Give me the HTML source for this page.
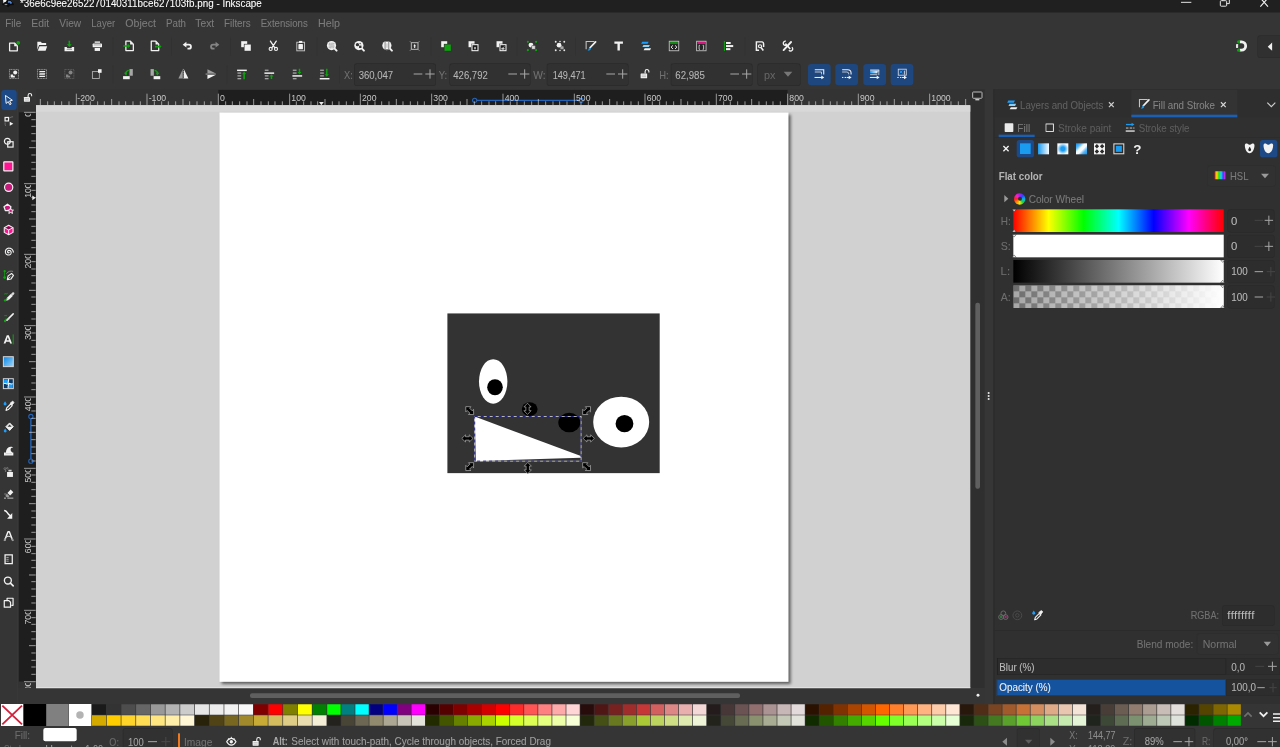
<!DOCTYPE html>
<html lang="en"><head><meta charset="utf-8"><title>Inkscape</title>
<style>
html,body{margin:0;padding:0;background:#353535;width:1280px;height:747px;overflow:hidden}
body{font-family:"Liberation Sans",sans-serif;-webkit-font-smoothing:antialiased}
#root{position:absolute;left:0;top:0;width:1920px;height:1121px;transform:scale(0.6666667);transform-origin:0 0;overflow:hidden;background:#353535}
#root div,#root svg.i,#root svg.a{position:absolute}
.t{white-space:nowrap;line-height:1.2;letter-spacing:-0.2px;-webkit-text-stroke:0.12px currentColor}
.b{font-weight:bold;-webkit-text-stroke:0}
svg{overflow:visible}

</style></head>
<body>
<div id="root">
<!-- p_base -->
<div style="left:0px;top:0px;width:1920px;height:18.5px;background:#202020"></div>
<div style="left:0px;top:18.5px;width:1920px;height:1102.5px;background:#353535"></div>
<div style="left:26px;top:133.5px;width:1px;height:922.5px;background:#3b3b3b"></div>
<div style="left:54px;top:157.5px;width:1401px;height:874px;background:#d1d1d1;overflow:hidden"></div>
<div style="left:1455px;top:133.5px;width:23px;height:898.5px;background:#2f2f2f"></div>
<div style="left:1490px;top:133.5px;width:430.5px;height:922.5px;background:#303030"></div>
<!-- p_menu -->
<svg class="a" style="left:3px;top:0" width="18" height="12" viewBox="0 0 18 12"><path d="M0.6,5.6L6.5,-1h5l6,6.6c0.8,1 0,2.4 -1.6,2.4h-3.4l-3.4,3l-3.6,-3H2.4c-1.8,0 -2.6,-1.4 -1.8,-2.4z" fill="#0c0c0e"/><path d="M1.6,0H7.2l-1.4,2.6l-2.2,0.6l-1.4,2z" fill="#f4f4f4"/><path d="M9.2,1.2l3.6,0.4l2.4,3l-2,1.4l-2.2,-2.2l-2.2,0.6z" fill="#4f86d8"/><path d="M3.2,6.6l3,-0.8l2.4,1.2l-2.6,0.8z" fill="#d8d8d8" opacity=".7"/></svg>
<div class="t" style="left:29.77px;top:-1.90px;font-size:16.95px;line-height:1;letter-spacing:0;color:#ffffff;transform:scaleX(0.872);transform-origin:0 0;">*36e6c9ee2652270140311bce627103fb.png - Inkscape</div>
<svg class="a" style="left:1760px;top:0" width="160" height="18" viewBox="0 0 160 18" fill="none" stroke="#f2f2f2" stroke-width="1.4"><path d="M11.5,3.5H27"/><rect x="70.5" y="1" width="9.5" height="8.3" rx="1.4"/><path d="M74,1V-2H84V5.4H80"/><path d="M130.5,-3L142,9.8M142,-3L130.5,9.8" stroke-width="1.7"/></svg>
<div class="t" style="left:7.88px;top:27.65px;font-size:16.95px;line-height:1;letter-spacing:0;color:#7c7c7c;transform:scaleX(0.868);transform-origin:0 0;">File</div>
<div class="t" style="left:47.17px;top:27.65px;font-size:16.95px;line-height:1;letter-spacing:0;color:#7c7c7c;transform:scaleX(0.914);transform-origin:0 0;">Edit</div>
<div class="t" style="left:89.47px;top:27.65px;font-size:16.95px;line-height:1;letter-spacing:0;color:#7c7c7c;transform:scaleX(0.897);transform-origin:0 0;">View</div>
<div class="t" style="left:137.48px;top:27.65px;font-size:16.95px;line-height:1;letter-spacing:0;color:#7c7c7c;transform:scaleX(0.842);transform-origin:0 0;">Layer</div>
<div class="t" style="left:188.18px;top:27.65px;font-size:16.95px;line-height:1;letter-spacing:0;color:#7c7c7c;transform:scaleX(0.937);transform-origin:0 0;">Object</div>
<div class="t" style="left:248.93px;top:27.65px;font-size:16.95px;line-height:1;letter-spacing:0;color:#7c7c7c;transform:scaleX(0.860);transform-origin:0 0;">Path</div>
<div class="t" style="left:293.48px;top:27.65px;font-size:16.95px;line-height:1;letter-spacing:0;color:#7c7c7c;transform:scaleX(0.907);transform-origin:0 0;">Text</div>
<div class="t" style="left:336.23px;top:27.65px;font-size:16.95px;line-height:1;letter-spacing:0;color:#7c7c7c;transform:scaleX(0.871);transform-origin:0 0;">Filters</div>
<div class="t" style="left:391.42px;top:27.65px;font-size:16.95px;line-height:1;letter-spacing:0;color:#7c7c7c;transform:scaleX(0.852);transform-origin:0 0;">Extensions</div>
<div class="t" style="left:476.92px;top:27.65px;font-size:16.95px;line-height:1;letter-spacing:0;color:#7c7c7c;transform:scaleX(0.947);transform-origin:0 0;">Help</div>
<!-- p_toolbar -->
<svg class="i" style="left:13.75px;top:61.3px;" width="16" height="16" viewBox="0 0 16 16" ><path d="M0.4,3.6h7.3999999999999995l4.2,4.2v7.3999999999999995h-11.6z" fill="none" stroke="#f2f2f2" stroke-width="1.9" stroke-linejoin="round"/><path d="M7.3999999999999995,3.6v4.6000000000000005h4.6000000000000005z" fill="#f2f2f2"/><circle cx="13.4" cy="3.3" r="2.8" fill="#0ea30e"/></svg>
<svg class="i" style="left:55.12px;top:61.3px;" width="16" height="16" viewBox="0 0 16 16" ><path d="M1,1.6h5.2l1.6,1.8h6.4v3.2H3.6L1,13.8z" fill="#f2f2f2"/><path d="M4.3,8.2H15.8L13.4,15H1.6z" fill="#f2f2f2"/></svg>
<svg class="i" style="left:96.49px;top:61.3px;" width="16" height="16" viewBox="0 0 16 16" ><path d="M0.8,9.6H4l1,1.6h6l1,-1.6H15.2V15.8H0.8z" fill="#f2f2f2"/><path d="M4,13.2H12" stroke="#777" stroke-width="1"/><path d="M6.8,0V5.3999999999999995H4.4L8,9.6L11.6,5.3999999999999995H9.2V0z" fill="#0ea30e"/></svg>
<svg class="i" style="left:137.86px;top:61.3px;" width="16" height="16" viewBox="0 0 16 16" ><rect x="4" y="1" width="8" height="2.4" fill="#f2f2f2" opacity=".85"/><rect x="1" y="4.4" width="14" height="5.6" rx="1" fill="#f2f2f2"/><path d="M2.5,6.4H13.5" stroke="#8a8a8a" stroke-width="1"/><rect x="4" y="11" width="8" height="4.4" fill="#f2f2f2"/></svg>
<div style="left:169px;top:55.5px;width:1px;height:27px;background:#313131"></div>
<svg class="i" style="left:184.555px;top:61.3px;" width="16" height="16" viewBox="0 0 16 16" ><path d="M3.8,0.8h6.799999999999999l4.4,4.4v9.6h-11.2z" fill="none" stroke="#f2f2f2" stroke-width="1.9" stroke-linejoin="round"/><path d="M10.2,0.8v4.800000000000001h4.800000000000001z" fill="#f2f2f2"/><path d="M0,6.7H6.6V4.5L10.6,8.0L6.6,11.5V9.3H0z" fill="#0ea30e"/></svg>
<svg class="i" style="left:225.925px;top:61.3px;" width="16" height="16" viewBox="0 0 16 16" ><path d="M0.9,0.8h6.799999999999999l4.4,4.4v9.6h-11.2z" fill="none" stroke="#f2f2f2" stroke-width="1.9" stroke-linejoin="round"/><path d="M7.299999999999999,0.8v4.800000000000001h4.800000000000001z" fill="#f2f2f2"/><path d="M6.6,7.500000000000001H12.399999999999999V5.300000000000001L16.4,8.8L12.399999999999999,12.3V10.100000000000001H6.6z" fill="#0ea30e"/></svg>
<div style="left:257px;top:55.5px;width:1px;height:27px;background:#313131"></div>
<svg class="i" style="left:272.62px;top:61.3px;" width="16" height="16" viewBox="0 0 16 16" ><path d="M1,6.2L6.6,1.8V4.6H10.4A4.4,4.4 0 0 1 10.4,13.4H8.2V10.6H10.4A1.6,1.6 0 0 0 10.4,7.4H6.6V10.4Z" fill="#f2f2f2"/></svg>
<svg class="i" style="left:313.99px;top:61.3px;" width="16" height="16" viewBox="0 0 16 16" ><g opacity=".42"><path transform="translate(16,0) scale(-1,1)" d="M1,6.2L6.6,1.8V4.6H10.4A4.4,4.4 0 0 1 10.4,13.4H8.2V10.6H10.4A1.6,1.6 0 0 0 10.4,7.4H6.6V10.4Z" fill="#f2f2f2"/></g></svg>
<div style="left:345px;top:55.5px;width:1px;height:27px;background:#313131"></div>
<svg class="i" style="left:360.685px;top:61.3px;" width="16" height="16" viewBox="0 0 16 16" ><rect x="0.8" y="0.8" width="9" height="9" fill="#f2f2f2"/><rect x="4.8" y="4.8" width="11" height="11" fill="#353535"/><rect x="5.8" y="5.8" width="9.4" height="9.4" fill="#f2f2f2"/></svg>
<svg class="i" style="left:402.055px;top:61.3px;" width="16" height="16" viewBox="0 0 16 16" ><path d="M3.6,0.6L10,10.4M12.4,0.6L6,10.4" stroke="#f2f2f2" stroke-width="1.9" fill="none" stroke-linecap="round"/><circle cx="4" cy="12.4" r="2.3" fill="none" stroke="#f2f2f2" stroke-width="1.7"/><circle cx="12" cy="12.4" r="2.3" fill="none" stroke="#f2f2f2" stroke-width="1.7"/></svg>
<svg class="i" style="left:443.425px;top:61.3px;" width="16" height="16" viewBox="0 0 16 16" ><rect x="2.2" y="2.4" width="11.6" height="12.8" fill="none" stroke="#bdbdbd" stroke-width="1.5"/><rect x="5.6" y="0.4" width="4.8" height="3" fill="#f2f2f2"/><rect x="4.6" y="5" width="6.8" height="8" rx="1" fill="#f2f2f2"/></svg>
<div style="left:474.5px;top:55.5px;width:1px;height:27px;background:#313131"></div>
<svg class="i" style="left:490.12px;top:61.3px;" width="16" height="16" viewBox="0 0 16 16" ><circle cx="7.3" cy="7.3" r="6.9" fill="#f2f2f2"/><path d="M11.6,11.6L14.9,14.9" stroke="#f2f2f2" stroke-width="3" stroke-linecap="round"/><rect x="3.8" y="3.8" width="7" height="7" fill="#dcdcdc" stroke="#8a8a8a" stroke-width="1" stroke-dasharray="1.4 0.9"/><path d="M5.4,6.2H9.2M5.4,8.4H9.2" stroke="#a0a0a0" stroke-width=".9"/></svg>
<svg class="i" style="left:531.49px;top:61.3px;" width="16" height="16" viewBox="0 0 16 16" ><circle cx="7.3" cy="7.3" r="6.9" fill="#f2f2f2"/><path d="M11.6,11.6L14.9,14.9" stroke="#f2f2f2" stroke-width="3" stroke-linecap="round"/><circle cx="5.2" cy="6" r="2.5" fill="#333"/><path d="M7.6,7.4h3.6v3.6h-3.6z" fill="#333"/><path d="M7.4,4.2l2.2,-1l1.4,2.4z" fill="#555"/></svg>
<svg class="i" style="left:572.86px;top:61.3px;" width="16" height="16" viewBox="0 0 16 16" ><circle cx="7.3" cy="7.3" r="6.9" fill="#f2f2f2"/><path d="M11.6,11.6L14.9,14.9" stroke="#f2f2f2" stroke-width="3" stroke-linecap="round"/><rect x="4.6" y="1.4" width="5.6" height="11.8" fill="#f6f6f6" stroke="#6a6a6a" stroke-width="1.2"/><rect x="6.4" y="4" width="2" height="6.6" fill="#c8c8c8"/></svg>
<svg class="i" style="left:614.23px;top:61.3px;" width="16" height="16" viewBox="0 0 16 16" ><rect x="3" y="3" width="10" height="10" fill="none" stroke="#b8b8b8" stroke-width="1.5"/><path d="M0.8,0.8L3,3M15.2,0.8L13,3M0.8,15.2L3,13M15.2,15.2L13,13" stroke="#9a9a9a" stroke-width="1.3"/><path d="M8,5L10,8.2H8.8V11H7.2V8.2H6z" fill="#f2f2f2"/></svg>
<div style="left:645.5px;top:55.5px;width:1px;height:27px;background:#313131"></div>
<svg class="i" style="left:660.925px;top:61.3px;" width="16" height="16" viewBox="0 0 16 16" ><rect x="0.8" y="0.8" width="9" height="9" fill="#f2f2f2"/><rect x="4.8" y="4.8" width="11" height="11" fill="#353535"/><rect x="5.8" y="5.8" width="9.4" height="9.4" fill="#0ea30e"/></svg>
<svg class="i" style="left:702.295px;top:61.3px;" width="16" height="16" viewBox="0 0 16 16" ><rect x="0.8" y="0.8" width="9" height="9" fill="#f2f2f2"/><rect x="4.6" y="4.6" width="11.2" height="11.2" fill="#353535"/><rect x="6" y="6" width="9" height="9" fill="#1a1a1a" stroke="#f2f2f2" stroke-width="1.6"/><path d="M9.2,13V10.4a1.3,1.3 0 0 1 2.6,0V13z" fill="#bbb"/></svg>
<svg class="i" style="left:743.665px;top:61.3px;" width="16" height="16" viewBox="0 0 16 16" ><rect x="0.8" y="0.8" width="9" height="9" fill="#f2f2f2"/><rect x="4.6" y="4.6" width="11.2" height="11.2" fill="#353535"/><rect x="6" y="6" width="9" height="9" fill="#1a1a1a" stroke="#f2f2f2" stroke-width="1.6"/><path d="M8.6,13V11h3.6v2zM11,10.6l1.6,-2.2" fill="#ccc" stroke="#ccc" stroke-width="1"/></svg>
<div style="left:775px;top:55.5px;width:1px;height:27px;background:#313131"></div>
<svg class="i" style="left:790.36px;top:61.3px;" width="16" height="16" viewBox="0 0 16 16" ><circle cx="1.8" cy="1.8" r="1.6" fill="#0ea30e"/><circle cx="1.8" cy="14.2" r="1.6" fill="#0ea30e"/><circle cx="14.2" cy="1.8" r="1.6" fill="#0ea30e"/><circle cx="14.2" cy="14.2" r="1.6" fill="#0ea30e"/><circle cx="6.4" cy="6.6" r="3.6" fill="#f2f2f2"/><rect x="7.4" y="7.4" width="5.6" height="5.6" rx="1" fill="#dcdcdc" stroke="#353535" stroke-width=".8"/></svg>
<svg class="i" style="left:831.73px;top:61.3px;" width="16" height="16" viewBox="0 0 16 16" ><circle cx="1.6" cy="1.6" r="1.4" fill="#e6e6e6"/><circle cx="1.6" cy="14.4" r="1.4" fill="#e6e6e6"/><circle cx="14.4" cy="1.6" r="1.4" fill="#e6e6e6"/><circle cx="14.4" cy="14.4" r="1.4" fill="#e6e6e6"/><circle cx="8" cy="1.2" r="1.2" fill="#ddd"/><circle cx="8" cy="14.8" r="1.2" fill="#ddd"/><circle cx="6.6" cy="6.8" r="3.6" fill="#f2f2f2"/><rect x="8.6" y="8.2" width="4.8" height="4.8" rx="1" fill="#a8a8a8"/></svg>
<div style="left:863px;top:55.5px;width:1px;height:27px;background:#313131"></div>
<svg class="i" style="left:878.425px;top:61.3px;" width="16" height="16" viewBox="0 0 16 16" ><path d="M1.2,13V1.2H13.6" fill="none" stroke="#c4c4c4" stroke-width="1.6"/><path d="M15.4,1.8L7,10.6" stroke="#f2f2f2" stroke-width="2.6" stroke-linecap="round"/><path d="M6.8,10.2l1.6,1.6c-0.4,2.2 -2.4,3.6 -5.2,3.4c1.6,-1 1.2,-3.6 3.6,-5z" fill="#1a9bf0"/></svg>
<svg class="i" style="left:919.795px;top:61.3px;" width="16" height="16" viewBox="0 0 16 16" ><path d="M1.6,1.4H14.4V4.6H9.8V14.8H6.2V4.6H1.6z" fill="#f2f2f2"/></svg>
<svg class="i" style="left:961.165px;top:61.3px;" width="16" height="16" viewBox="0 0 16 16" ><path d="M2.4,1.8H12l-1.6,3H0.8z" fill="#1a9fff"/><path d="M4.2,6.6H13.8l-1.6,3H2.6z" fill="#8ccff7"/><path d="M6,11.4H15.6l-1.6,3H4.4z" fill="#f2f2f2"/></svg>
<svg class="i" style="left:1002.53px;top:61.3px;" width="16" height="16" viewBox="0 0 16 16" ><rect x="0.9" y="0.9" width="14.2" height="14.2" fill="#262626" stroke="#bdbdbd" stroke-width="1.4"/><rect x="2.2" y="2.2" width="11.6" height="2.6" fill="#0e9a0e"/><path d="M6.4,7.2L3.6,9.8L6.4,12.4M9.6,7.2L12.4,9.8L9.6,12.4" fill="none" stroke="#f2f2f2" stroke-width="1.5"/></svg>
<svg class="i" style="left:1043.9px;top:61.3px;" width="16" height="16" viewBox="0 0 16 16" ><rect x="0.9" y="0.9" width="14.2" height="14.2" fill="#262626" stroke="#bdbdbd" stroke-width="1.4"/><rect x="2.2" y="2.2" width="11.6" height="2.6" fill="#f0148c"/><path d="M6,7H4.6V13H6M10,7H11.4V13H10" fill="none" stroke="#c8c8c8" stroke-width="1.4"/></svg>
<svg class="i" style="left:1085.28px;top:61.3px;" width="16" height="16" viewBox="0 0 16 16" ><path d="M1.6,0.4V15.6" stroke="#0ea30e" stroke-width="1.5"/><rect x="4" y="2" width="7" height="3" fill="#f2f2f2"/><rect x="4" y="6.6" width="10.8" height="3" fill="#f2f2f2"/><rect x="4" y="11.2" width="6.6" height="3" fill="#f2f2f2"/></svg>
<div style="left:1116.5px;top:55.5px;width:1px;height:27px;background:#313131"></div>
<svg class="i" style="left:1131.97px;top:61.3px;" width="16" height="16" viewBox="0 0 16 16" ><path d="M6.6,14.4H2.6V1.8H10.6a2.8,2.8 0 0 1 2.8,2.8V9.6" fill="none" stroke="#f2f2f2" stroke-width="2.2"/><circle cx="8" cy="8.4" r="2.3" fill="none" stroke="#f2f2f2" stroke-width="1.7"/><path d="M9.6,10.2L13,14.8" stroke="#f2f2f2" stroke-width="2.4"/></svg>
<svg class="i" style="left:1173.34px;top:61.3px;" width="16" height="16" viewBox="0 0 16 16" ><path d="M2.4,14.2L13.6,2" stroke="#f2f2f2" stroke-width="2.8" stroke-linecap="round"/><path d="M5,4.4L12.4,12.6" stroke="#f2f2f2" stroke-width="2.4"/><path d="M5.8,0.8a3.2,3.2 0 1 0 0.8,6" fill="none" stroke="#f2f2f2" stroke-width="2"/><path d="M14.8,9.8a3.2,3.2 0 1 1 -4.4,4.6" fill="none" stroke="#f2f2f2" stroke-width="2"/></svg>
<svg class="i" style="left:13.3px;top:102.85px;" width="16" height="16" viewBox="0 0 16 16" ><rect x="1.2" y="1.2" width="13.6" height="13.6" fill="none" stroke="#a8a8a8" stroke-width="1.2" stroke-dasharray="1.6 0.8" opacity="1"/><circle cx="9.8" cy="5.8" r="3" fill="#f2f2f2"/><path d="M3,8.6H6.6V10.6H9.2V13.2H3z" fill="#f2f2f2"/></svg>
<svg class="i" style="left:54.55px;top:102.85px;" width="16" height="16" viewBox="0 0 16 16" ><rect x="1.2" y="1.2" width="13.6" height="13.6" fill="none" stroke="#a8a8a8" stroke-width="1.2" stroke-dasharray="1.6 0.8" opacity="1"/><path d="M4.4,3.4H13l-0.8,2H3.6zM4.4,7H13l-0.8,2H3.6zM4.4,10.6H13l-0.8,2H3.6z" fill="#f2f2f2"/></svg>
<svg class="i" style="left:95.8px;top:102.85px;" width="16" height="16" viewBox="0 0 16 16" ><g opacity=".42"><rect x="1.2" y="1.2" width="13.6" height="13.6" fill="none" stroke="#a8a8a8" stroke-width="1.2" stroke-dasharray="1.6 0.8" opacity="1"/><circle cx="9.8" cy="5.8" r="3" fill="#f2f2f2"/><path d="M3,8.6H6.6V10.6H9.2V13.2H3z" fill="#f2f2f2"/></g></svg>
<svg class="i" style="left:137.05px;top:102.85px;" width="16" height="16" viewBox="0 0 16 16" ><rect x="1.6" y="4.4" width="10.4" height="10.4" fill="none" stroke="#b4b4b4" stroke-width="1.3"/><rect x="10" y="0.8" width="5.4" height="5.4" fill="#f2f2f2"/></svg>
<div style="left:168.5px;top:97.5px;width:1px;height:27px;background:#313131"></div>
<svg class="i" style="left:184.15px;top:102.85px;" width="16" height="16" viewBox="0 0 16 16" ><rect x="10.2" y="0.6" width="5" height="10" fill="#a6a6a6"/><rect x="0.6" y="11.2" width="10" height="4.6" fill="#f2f2f2"/><path d="M9.2,2.6A6,6 0 0 0 4.4,7.4" fill="none" stroke="#0ea30e" stroke-width="2.2"/><path d="M1.8,6.2L7.2,6L5.4,10.6z" fill="#0ea30e"/></svg>
<svg class="i" style="left:225.4px;top:102.85px;" width="16" height="16" viewBox="0 0 16 16" ><g transform="translate(16,0) scale(-1,1)"><rect x="10.2" y="0.6" width="5" height="10" fill="#a6a6a6"/><rect x="0.6" y="11.2" width="10" height="4.6" fill="#f2f2f2"/><path d="M9.2,2.6A6,6 0 0 0 4.4,7.4" fill="none" stroke="#0ea30e" stroke-width="2.2"/><path d="M1.8,6.2L7.2,6L5.4,10.6z" fill="#0ea30e"/></g></svg>
<svg class="i" style="left:266.65px;top:102.85px;" width="16" height="16" viewBox="0 0 16 16" ><path d="M7,1.4V14.8H0.6z" fill="#9c9c9c"/><path d="M9,1.4V14.8H15.6z" fill="#f2f2f2"/><path d="M8,0.4V15.8" stroke="#c8c8c8" stroke-width="1" stroke-dasharray="2 1.2"/></svg>
<svg class="i" style="left:307.9px;top:102.85px;" width="16" height="16" viewBox="0 0 16 16" ><path d="M3.2,6.8H15.2L3.2,0.8z" fill="#9c9c9c"/><path d="M3.2,9.4H15.2L3.2,15.4z" fill="#f2f2f2"/><path d="M0.4,8.1H15.8" stroke="#d0d0d0" stroke-width="1.1"/></svg>
<div style="left:339.5px;top:97.5px;width:1px;height:27px;background:#313131"></div>
<svg class="i" style="left:355px;top:102.85px;" width="16" height="16" viewBox="0 0 16 16" ><rect x="0.6" y="1.4" width="14.6" height="2.2" fill="#f2f2f2"/><rect x="1.2" y="5.6" width="5.6" height="2" fill="#a2a2a2"/><rect x="1.2" y="9.8" width="5.6" height="2" fill="#a2a2a2"/><rect x="1.2" y="14.000000000000002" width="5.6" height="2" fill="#a2a2a2"/><path d="M10.0,15.8V8.2H8.1L11.2,4.4L14.299999999999999,8.2H12.399999999999999V15.8z" fill="#0ea30e"/></svg>
<svg class="i" style="left:396.25px;top:102.85px;" width="16" height="16" viewBox="0 0 16 16" ><rect x="1.2" y="1.4" width="5.6" height="2" fill="#a2a2a2"/><rect x="0.6" y="5.6" width="14.6" height="2.2" fill="#f2f2f2"/><rect x="1.2" y="9.8" width="5.6" height="2" fill="#a2a2a2"/><rect x="1.2" y="14.000000000000002" width="5.6" height="2" fill="#a2a2a2"/><path d="M10.1,15.6V11.6H8.2L11.2,8.2L14.2,11.6H12.299999999999999V15.6z" fill="#0ea30e"/></svg>
<svg class="i" style="left:437.5px;top:102.85px;" width="16" height="16" viewBox="0 0 16 16" ><rect x="1.2" y="1.4" width="5.6" height="2" fill="#a2a2a2"/><rect x="1.2" y="5.6" width="5.6" height="2" fill="#a2a2a2"/><rect x="0.6" y="9.8" width="14.6" height="2.2" fill="#f2f2f2"/><rect x="1.2" y="14.000000000000002" width="5.6" height="2" fill="#a2a2a2"/><path d="M10.1,0.2V5.0H8.2L11.2,8.6L14.2,5.0H12.299999999999999V0.2z" fill="#0ea30e"/></svg>
<svg class="i" style="left:478.75px;top:102.85px;" width="16" height="16" viewBox="0 0 16 16" ><rect x="1.2" y="1.4" width="5.6" height="2" fill="#a2a2a2"/><rect x="1.2" y="5.6" width="5.6" height="2" fill="#a2a2a2"/><rect x="1.2" y="9.8" width="5.6" height="2" fill="#a2a2a2"/><rect x="0.6" y="14.000000000000002" width="14.6" height="2.2" fill="#f2f2f2"/><path d="M10.1,0.2V8.2H8.2L11.2,12L14.2,8.2H12.299999999999999V0.2z" fill="#0ea30e"/></svg>
<div style="left:509px;top:97.5px;width:1px;height:27px;background:#313131"></div>
<div class="t" style="left:515.92px;top:104.60px;font-size:16.95px;line-height:1;letter-spacing:0;color:#727272;transform:scaleX(0.824);transform-origin:0 0;">X:</div><div style="left:531px;top:95px;width:122.5px;height:34px;background:#313131;border-radius:5px;box-shadow:inset 0 0 0 1px #2a2a2a"></div><div class="t" style="left:538.42px;top:104.60px;font-size:16.95px;line-height:1;letter-spacing:0;color:#b6b6b6;transform:scaleX(0.845);transform-origin:0 0;">360,047</div><svg class="a" style="left:620.2px;top:101.2px" width="34" height="20" viewBox="0 0 34 20" fill="none" stroke="#a8a8a8" stroke-width="1.5"><path d="M0.5,10H13.5M18,10H32M25,3V17"/></svg>
<div class="t" style="left:658.42px;top:104.60px;font-size:16.95px;line-height:1;letter-spacing:0;color:#727272;transform:scaleX(0.845);transform-origin:0 0;">Y:</div><div style="left:673.5px;top:95px;width:122px;height:34px;background:#313131;border-radius:5px;box-shadow:inset 0 0 0 1px #2a2a2a"></div><div class="t" style="left:680.47px;top:104.60px;font-size:16.95px;line-height:1;letter-spacing:0;color:#b6b6b6;transform:scaleX(0.842);transform-origin:0 0;">426,792</div><svg class="a" style="left:761.9px;top:101.2px" width="34" height="20" viewBox="0 0 34 20" fill="none" stroke="#a8a8a8" stroke-width="1.5"><path d="M0.5,10H13.5M18,10H32M25,3V17"/></svg>
<div class="t" style="left:800.47px;top:104.60px;font-size:16.95px;line-height:1;letter-spacing:0;color:#727272;transform:scaleX(0.904);transform-origin:0 0;">W:</div><div style="left:819.5px;top:95px;width:123.5px;height:34px;background:#313131;border-radius:5px;box-shadow:inset 0 0 0 1px #2a2a2a"></div><div class="t" style="left:828.67px;top:104.60px;font-size:16.95px;line-height:1;letter-spacing:0;color:#b6b6b6;transform:scaleX(0.808);transform-origin:0 0;">149,471</div><svg class="a" style="left:909.3px;top:101.2px" width="34" height="20" viewBox="0 0 34 20" fill="none" stroke="#a8a8a8" stroke-width="1.5"><path d="M0.5,10H13.5M18,10H32M25,3V17"/></svg>
<svg class="i" style="left:959.55px;top:102.9px;" width="15" height="15" viewBox="0 0 16 16" ><rect x="1" y="7.6" width="10.4" height="7.8" rx="0.8" fill="#f2f2f2"/><path d="M8.2,7.6V4.4a3,3 0 0 1 6,0V6.2" fill="none" stroke="#f2f2f2" stroke-width="1.8"/><path d="M2.6,10.2H9.8M2.6,12.8H9.8" stroke="#9a9a9a" stroke-width=".9"/></svg>
<div class="t" style="left:989.03px;top:104.60px;font-size:16.95px;line-height:1;letter-spacing:0;color:#727272;transform:scaleX(0.832);transform-origin:0 0;">H:</div><div style="left:1005.5px;top:95px;width:123.5px;height:34px;background:#313131;border-radius:5px;box-shadow:inset 0 0 0 1px #2a2a2a"></div><div class="t" style="left:1012.88px;top:104.60px;font-size:16.95px;line-height:1;letter-spacing:0;color:#b6b6b6;transform:scaleX(0.854);transform-origin:0 0;">62,985</div><svg class="a" style="left:1095.3px;top:101.2px" width="34" height="20" viewBox="0 0 34 20" fill="none" stroke="#a8a8a8" stroke-width="1.5"><path d="M0.5,10H13.5M18,10H32M25,3V17"/></svg>
<div style="left:1136px;top:95px;width:64.5px;height:34px;background:#313131;border-radius:5px;box-shadow:inset 0 0 0 1px #2a2a2a"></div>
<div class="t" style="left:1145.78px;top:104.90px;font-size:16.95px;line-height:1;letter-spacing:0;color:#666;transform:scaleX(0.955);transform-origin:0 0;">px</div>
<svg class="a" style="left:1175px;top:106.5px" width="14" height="9" viewBox="0 0 14 9"><path d="M0.5,0.5H13.5L7,8z" fill="#777"/></svg>
<div style="left:1212px;top:95.5px;width:34px;height:32px;background:#1f477f;border-radius:5px"></div>
<svg class="i" style="left:1221.1px;top:103px;" width="16" height="16" viewBox="0 0 16 16" ><path d="M1.2,1.6H14.6V8.6" fill="none" stroke="#f2f2f2" stroke-width="1.6"/><path d="M1.2,5H11.2V8.6" fill="none" stroke="#d8d8d8" stroke-width="1.3"/><path d="M0.8,13.2H12" stroke="#f2f2f2" stroke-width="1.5"/><path d="M11,10.4L15.4,13.2L11,16z" fill="#f2f2f2"/></svg>
<div style="left:1253px;top:95.5px;width:34px;height:32px;background:#1f477f;border-radius:5px"></div>
<svg class="i" style="left:1262.35px;top:103px;" width="16" height="16" viewBox="0 0 16 16" ><path d="M1.2,1.6H9.6A5,5 0 0 1 14.6,6.6V8.6" fill="none" stroke="#f2f2f2" stroke-width="1.6"/><path d="M1.2,5H8.2A3,3 0 0 1 11.2,8V8.6" fill="none" stroke="#d8d8d8" stroke-width="1.3"/><path d="M1,13.2H3M5,13.2H7" stroke="#f2f2f2" stroke-width="1.5"/><path d="M8,13.2H12" stroke="#f2f2f2" stroke-width="1.5"/><path d="M11,10.4L15.4,13.2L11,16z" fill="#f2f2f2"/></svg>
<div style="left:1294.5px;top:95.5px;width:34px;height:32px;background:#1f477f;border-radius:5px"></div>
<svg class="i" style="left:1303.6px;top:103px;" width="16" height="16" viewBox="0 0 16 16" ><defs><linearGradient id="tg3g" x1="0" x2="1"><stop offset="0" stop-color="#1a9fff"/><stop offset="1" stop-color="#e8f4ff"/></linearGradient></defs><rect x="1.2" y="1" width="13.6" height="3.6" fill="#9cb4d4"/><rect x="1.2" y="3.4" width="11" height="3.6" fill="url(#tg3g)"/><path d="M14.2,2V9.6M1.2,9H12" stroke="#d8d8d8" stroke-width="1.2" fill="none"/><path d="M0.8,13.2H12" stroke="#f2f2f2" stroke-width="1.5"/><path d="M11,10.4L15.4,13.2L11,16z" fill="#f2f2f2"/></svg>
<div style="left:1336px;top:95.5px;width:34px;height:32px;background:#1f477f;border-radius:5px"></div>
<svg class="i" style="left:1344.85px;top:103px;" width="16" height="16" viewBox="0 0 16 16" ><rect x="2.4" y="0.8" width="12" height="9" fill="none" stroke="#d0d8e4" stroke-width="1.3"/><path d="M4.6,2.8L8.6,6.8M8.6,2.8L4.6,6.8" stroke="#1a9fff" stroke-width="1.5"/><path d="M11.6,3V9" stroke="#f2f2f2" stroke-width="1.2"/><path d="M1,13.2H3M5,13.2H7" stroke="#f2f2f2" stroke-width="1.5"/><path d="M8,13.2H12" stroke="#f2f2f2" stroke-width="1.5"/><path d="M11,10.4L15.4,13.2L11,16z" fill="#f2f2f2"/></svg>
<svg class="i" style="left:1852.95px;top:60.45px;" width="18" height="18" viewBox="0 0 18 18" ><path d="M6.4,2.8H9.3A6.2,6.2 0 0 1 9.3,15.2H6.4" fill="none" stroke="#f2f2f2" stroke-width="4.2"/><circle cx="4.9" cy="2.8" r="2.3" fill="#0ea30e"/><circle cx="4.9" cy="15.2" r="2.3" fill="#0ea30e"/><rect x="1" y="6" width="3.2" height="6" rx="0.6" fill="#e4e4e4"/></svg>
<div style="left:1886px;top:53px;width:36px;height:33.5px;background:#303030;border-radius:5px 0 0 5px;box-shadow:inset 0 0 0 1px #2b2b2b"></div>
<svg class="a" style="left:1900.5px;top:62.5px" width="8" height="14" viewBox="0 0 8 14"><path d="M7.2,0.8V13.2L0.6,7z" fill="#f0f0f0"/></svg>
<!-- p_toolbox -->
<div style="left:2px;top:134.5px;width:22.5px;height:30.5px;background:#1d4a86;border-radius:4.5px"></div>
<svg class="i" style="left:4.75px;top:142.3px;" width="16" height="16" viewBox="0 0 16 16" ><path d="M3.2,1.2L13.6,8.4L9.4,9.4L11.8,14L9.6,15L7.4,10.4L4.2,13.2z" fill="#1d4a86" stroke="#f2f2f2" stroke-width="1.5" stroke-linejoin="round"/></svg>
<svg class="i" style="left:4.75px;top:173.8px;" width="16" height="16" viewBox="0 0 16 16" ><rect x="2.6" y="2.2" width="5.2" height="5.2" fill="#353535" stroke="#f2f2f2" stroke-width="1.8"/><path d="M8.6,3.6C10.6,1.8 12.4,1.2 14.6,1.2" fill="none" stroke="#8a8a8a" stroke-width="1"/><path d="M2.6,9.6C2.4,11.8 2.8,13.4 3.4,14.8" fill="none" stroke="#8a8a8a" stroke-width="1"/><path d="M9.6,8.6L15,11.6L9.6,14.8z" fill="#f2f2f2"/></svg>
<svg class="i" style="left:4.75px;top:206.2px;" width="16" height="16" viewBox="0 0 16 16" ><circle cx="6" cy="6" r="4.4" fill="none" stroke="#f2f2f2" stroke-width="1.8"/><rect x="6.6" y="6.6" width="8" height="8" fill="none" stroke="#f2f2f2" stroke-width="1.8"/><path d="M7.6,7.6h3l-3,3z" fill="#ccc"/></svg>
<svg class="i" style="left:4.25px;top:240.5px;" width="17" height="17" viewBox="0 0 16 16" ><rect x="1.6" y="1.6" width="12.8" height="12.8" rx="0.6" fill="#ff1493" stroke="#f2f2f2" stroke-width="1.7"/></svg>
<svg class="i" style="left:4.75px;top:273.4px;" width="16" height="16" viewBox="0 0 16 16" ><circle cx="8" cy="8" r="6.2" fill="#c8197c" stroke="#f2f2f2" stroke-width="1.8"/></svg>
<svg class="i" style="left:4.75px;top:305.2px;" width="16" height="16" viewBox="0 0 16 16" ><path d="M6.2,1.4L11.4,5.2L9.6,11H3L1,5.2z" fill="#c8197c" stroke="#f2f2f2" stroke-width="1.9" stroke-linejoin="round"/><path d="M11,7.2L12.2,10L15.2,10.2L13,12.2L13.8,15.2L11,13.6L8.2,15.2L9,12.2L6.8,10.2L9.8,10z" fill="#c8197c" stroke="#f2f2f2" stroke-width="1.5" stroke-linejoin="round"/></svg>
<svg class="i" style="left:4.75px;top:337.3px;" width="16" height="16" viewBox="0 0 16 16" ><path d="M8,1L14.6,4.4V11.6L8,15L1.4,11.6V4.4z" fill="#ff1493" stroke="#f2f2f2" stroke-width="1.6" stroke-linejoin="round"/><path d="M1.4,4.4L8,7.8L14.6,4.4M8,7.8V15" fill="none" stroke="#f2f2f2" stroke-width="1.5"/><path d="M8,2.6L12.4,4.6L8,6.8L3.6,4.6z" fill="#7a0f4c"/></svg>
<svg class="i" style="left:4.75px;top:369.7px;" width="16" height="16" viewBox="0 0 16 16" ><path d="M8.6,8.7L8.5,8.8L8.4,9.0L8.2,9.1L8.1,9.2L7.8,9.3L7.6,9.3L7.3,9.2L7.1,9.1L6.8,8.9L6.6,8.6L6.5,8.3L6.4,8.0L6.4,7.6L6.4,7.2L6.6,6.8L6.8,6.4L7.1,6.1L7.5,5.8L8.0,5.6L8.5,5.5L9.0,5.6L9.6,5.7L10.1,5.9L10.6,6.2L11.0,6.7L11.3,7.2L11.6,7.8L11.7,8.5L11.7,9.2L11.5,9.9L11.2,10.5L10.8,11.2L10.2,11.7L9.5,12.1L8.8,12.4L7.9,12.5L7.1,12.5L6.2,12.3L5.4,11.9L4.7,11.4L4.0,10.7L3.6,9.9L3.2,9.0L3.1,8.0L3.1,7.0L3.3,6.0L3.8,5.0L4.4,4.1L5.2,3.4L6.1,2.8L7.2,2.4L8.3,2.2L9.5,2.3L10.7,2.5L11.8,3.0L12.8,3.7L13.6,4.6L14.3,5.7L14.8,6.9L15.0,8.2" fill="none" stroke="#f2f2f2" stroke-width="1.7" stroke-linecap="round" stroke-linejoin="round"/></svg>
<svg class="i" style="left:4.75px;top:404.8px;" width="16" height="16" viewBox="0 0 16 16" ><path d="M2,1.6V11" stroke="#0ea30e" stroke-width="1.3"/><circle cx="2" cy="1.8" r="1.7" fill="#0ea30e"/><circle cx="2" cy="11.4" r="2" fill="#0ea30e"/><path d="M4.6,5.4C7.4,1.8 11,1 14.6,2.2" fill="none" stroke="#9a9a9a" stroke-width="1.1"/><path d="M6,14.6L7.2,8.8L12.4,5.2L15.2,8L11.6,13.4z" fill="none" stroke="#f2f2f2" stroke-width="1.7" stroke-linejoin="round"/><path d="M6.4,14.2L10.6,10" stroke="#f2f2f2" stroke-width="1.3"/></svg>
<svg class="i" style="left:4.75px;top:436.6px;" width="16" height="16" viewBox="0 0 16 16" ><path d="M1.4,4.2C3,2.6 4.6,5 6.4,3" fill="none" stroke="#0ea30e" stroke-width="1.4"/><circle cx="2.6" cy="13.6" r="1.8" fill="#0ea30e"/><path d="M2.6,13.6L5,10.6" stroke="#0ea30e" stroke-width="1.4"/><path d="M6.6,11.6L12.6,5.4" stroke="#f2f2f2" stroke-width="4.2" stroke-linecap="butt"/><path d="M13.4,4.6L14.8,3.2" stroke="#d8d8d8" stroke-width="3.6" stroke-linecap="round"/><path d="M4.4,14L5.2,10.2L8.2,13z" fill="#f2f2f2"/></svg>
<svg class="i" style="left:4.75px;top:468.4px;" width="16" height="16" viewBox="0 0 16 16" ><path d="M1.6,5.6C3,4.4 4,6.6 5.6,5" fill="none" stroke="#0ea30e" stroke-width="1.3"/><circle cx="2.6" cy="13.6" r="1.8" fill="#0ea30e"/><path d="M2.6,13.6L4.4,9.4" stroke="#0ea30e" stroke-width="1.3"/><path d="M5.4,12.2L14.8,2.8" stroke="#f2f2f2" stroke-width="2.2" stroke-linecap="round"/><path d="M4.4,13.6L7.6,9.4L9.4,11.2z" fill="#c4c4c4"/></svg>
<svg class="i" style="left:4.75px;top:500.8px;" width="16" height="16" viewBox="0 0 16 16" ><path d="M0.4,14.4L5.2,2H8.2L13,14.4H10.2L9.2,11.6H4.2L3.2,14.4zM5,9.4H8.4L6.7,4.6z" fill="#f2f2f2"/><path d="M14.8,0.6V15.6" stroke="#0ea30e" stroke-width="1.5"/></svg>
<svg class="i" style="left:4.25px;top:534.2px;" width="17" height="17" viewBox="0 0 16 16" ><defs><linearGradient id="tgr" x1="0" y1="0" x2="1" y2="1"><stop offset="0" stop-color="#0c86e4"/><stop offset="1" stop-color="#9ad4fa"/></linearGradient></defs><rect x="1" y="1" width="14" height="14" fill="url(#tgr)" stroke="#d8d8d8" stroke-width="1.4"/></svg>
<svg class="i" style="left:4.25px;top:567.2px;" width="17" height="17" viewBox="0 0 16 16" ><rect x="1" y="1" width="14" height="14" fill="#0b3a68" stroke="#d8d8d8" stroke-width="1.4"/><path d="M2,2H8C9.6,4.4 6.6,6 8,8C5.8,6.6 4.2,9.4 2,8z" fill="#1a9fff"/><path d="M14,14H8C6.4,11.6 9.4,10 8,8C10.2,9.4 11.8,6.6 14,8z" fill="#1a9fff"/><path d="M8,1.6C9.8,4.2 6.4,5.8 8,8C9.6,10.2 6.2,11.8 8,14.4M1.6,8C4.2,6.2 5.8,9.6 8,8C10.2,6.4 11.8,9.8 14.4,8" fill="none" stroke="#f0f8ff" stroke-width="1.5"/></svg>
<svg class="i" style="left:4.75px;top:600.7px;" width="16" height="16" viewBox="0 0 16 16" ><path d="M2.6,0.8C4.2,3 4.8,4 4.8,5A2.2,2.2 0 0 1 0.4,5C0.4,4 1,3 2.6,0.8z" fill="#1a9fff"/><path d="M4,14.6L5,11L11,5L13.4,7.4L7.4,13.4z" fill="none" stroke="#f2f2f2" stroke-width="1.6" stroke-linejoin="round"/><path d="M10.4,3.8L12.6,1.6a1.8,1.8 0 0 1 2.6,2.6L13,6.4z" fill="#f2f2f2" stroke="#f2f2f2" stroke-width="1.2"/></svg>
<svg class="i" style="left:4.75px;top:632.5px;" width="16" height="16" viewBox="0 0 16 16" ><path d="M9.4,1.4L15,7L9.4,12.6L3.8,7z" fill="#f2f2f2" stroke="#f2f2f2" stroke-width="1.4" stroke-linejoin="round"/><path d="M6.2,7L9.4,3.8L12.6,7z" fill="#3a3a3a"/><path d="M2.8,9.6C4.4,11.8 5,12.8 5,13.6A2.2,2.2 0 0 1 0.6,13.6C0.6,12.8 1.2,11.8 2.8,9.6z" fill="#1a9fff"/></svg>
<svg class="i" style="left:4.75px;top:667.6px;" width="16" height="16" viewBox="0 0 16 16" ><path d="M1,15.4V10.6H4C4.2,6.4 6.4,2.6 11,2.2C12.8,2 14.2,2.8 14.8,4C13,3.4 11.4,4.2 11,5.8C10.6,7.6 11.8,9.2 13.6,10.6H15V15.4z" fill="#f2f2f2"/><path d="M3.4,12.6H12.6" stroke="#bdbdbd" stroke-width="1"/></svg>
<svg class="i" style="left:4.75px;top:700px;" width="16" height="16" viewBox="0 0 16 16" ><rect x="5.6" y="8" width="8.8" height="7.4" fill="#f2f2f2"/><rect x="7.6" y="4.6" width="4.8" height="2.6" fill="#d0d0d0"/><circle cx="2.4" cy="3" r="1.5" fill="none" stroke="#8a8a8a" stroke-width="1"/><circle cx="6" cy="2.4" r="1.2" fill="none" stroke="#8a8a8a" stroke-width="1"/><circle cx="3.4" cy="6.6" r="1.2" fill="#8a8a8a"/></svg>
<svg class="i" style="left:4.75px;top:732.1px;" width="16" height="16" viewBox="0 0 16 16" ><path d="M6.2,7.4L11,2.4L15,6.4L10.2,11.4z" fill="#f2f2f2"/><path d="M5.2,8.4L9.2,12.4L7.6,14H5L3,12z" fill="#9a9a9a"/><path d="M1,15.2H4M6,15.2H15" stroke="#d8d8d8" stroke-width="1.3"/><circle cx="2.6" cy="9" r="1" fill="#999"/></svg>
<svg class="i" style="left:4.75px;top:763px;" width="16" height="16" viewBox="0 0 16 16" ><path d="M1.2,2.6C5.4,2.6 5,6 8,8.6C9.6,10 10.6,10.4 11.4,11.4" fill="none" stroke="#f2f2f2" stroke-width="2.2"/><path d="M13.4,6.4V15H5.6z" fill="#f2f2f2"/></svg>
<svg class="i" style="left:4.75px;top:795.7px;" width="16" height="16" viewBox="0 0 16 16" ><path d="M1.8,15L7,1.6H9L14.2,15" fill="none" stroke="#f2f2f2" stroke-width="2.2" stroke-linejoin="round"/><path d="M4.2,9.6C6.6,8.2 9.4,8.2 11.8,9.6" fill="none" stroke="#d8d8d8" stroke-width="1.6"/><path d="M3,11.6L1.4,15.4M13,11.6L14.6,15.4" stroke="#9a9a9a" stroke-width="2.6"/></svg>
<svg class="i" style="left:4.75px;top:831.1px;" width="16" height="16" viewBox="0 0 16 16" ><path d="M2.6,1.4H13.4V14.6H2.6z" fill="none" stroke="#f2f2f2" stroke-width="1.9"/><path d="M4.6,5.2H8M4.6,8H8M4.6,10.8H8" stroke="#bdbdbd" stroke-width="1.2"/></svg>
<svg class="i" style="left:4.75px;top:863.5px;" width="16" height="16" viewBox="0 0 16 16" ><circle cx="6.8" cy="6.8" r="5.2" fill="none" stroke="#f2f2f2" stroke-width="2"/><path d="M10.6,10.6L14.8,14.8" stroke="#f2f2f2" stroke-width="2.4" stroke-linecap="round"/></svg>
<svg class="i" style="left:4.75px;top:895.6px;" width="16" height="16" viewBox="0 0 16 16" ><path d="M5.6,4V1.4H14.6V12H12" fill="none" stroke="#f2f2f2" stroke-width="1.8" stroke-linejoin="round"/><path d="M1.4,5H8.4L10.8,7.4V14.8H1.4z" fill="none" stroke="#f2f2f2" stroke-width="1.8" stroke-linejoin="round"/></svg>
<svg class="i" style="left:35.3px;top:138.8px;" width="14" height="14" viewBox="0 0 16 16" ><rect x="1" y="7.6" width="10.4" height="7.8" rx="0.8" fill="#f2f2f2"/><path d="M8.2,7.6V4.4a3,3 0 0 1 6,0V6.2" fill="none" stroke="#f2f2f2" stroke-width="1.8"/><path d="M2.6,10.2H9.8M2.6,12.8H9.8" stroke="#9a9a9a" stroke-width=".9"/></svg>
<!-- p_rulers -->
<svg class="a" style="left:53.55px;top:133.5px;overflow:hidden" width="1401.45" height="24" viewBox="0 0 1401.45 24" font-family="Liberation Sans, sans-serif" font-size="14.2" fill="#c9c9c9">
<rect x="0" y="0" width="1401.45" height="24" fill="#333333"/>
<rect x="273.45" y="0.8" width="853.80" height="23.20" fill="#1e1e1e"/>
<path d="M658.0,16.5H817.6" stroke="#2264bd" stroke-width="2"/>
<circle cx="658.0" cy="16.5" r="3.2" fill="#1e1e1e" stroke="#2264bd" stroke-width="1.6"/>
<circle cx="817.6" cy="16.5" r="3.2" fill="#1e1e1e" stroke="#2264bd" stroke-width="1.6"/>
<path d="M6.5,14.5V24M17.5,18V24M27.5,18V24M38.5,18V24M49.5,18V24M60.5,6.5V24M70.5,18V24M81.5,18V24M92.5,18V24M102.5,18V24M113.5,14.5V24M124.5,18V24M134.5,18V24M145.5,18V24M156.5,18V24M166.5,6.5V24M177.5,18V24M188.5,18V24M198.5,18V24M209.5,18V24M220.5,14.5V24M230.5,18V24M241.5,18V24M252.5,18V24M262.5,18V24M273.5,6.5V24M284.5,18V24M294.5,18V24M305.5,18V24M316.5,18V24M326.5,14.5V24M337.5,18V24M348.5,18V24M358.5,18V24M369.5,18V24M380.5,6.5V24M390.5,18V24M401.5,18V24M412.5,18V24M422.5,18V24M433.5,14.5V24M444.5,18V24M454.5,18V24M465.5,18V24M476.5,18V24M486.5,6.5V24M497.5,18V24M508.5,18V24M518.5,18V24M529.5,18V24M540.5,14.5V24M550.5,18V24M561.5,18V24M572.5,18V24M582.5,18V24M593.5,6.5V24M604.5,18V24M614.5,18V24M625.5,18V24M636.5,18V24M646.5,14.5V24M657.5,18V24M668.5,18V24M679.5,18V24M689.5,18V24M700.5,6.5V24M711.5,18V24M721.5,18V24M732.5,18V24M743.5,18V24M753.5,14.5V24M764.5,18V24M775.5,18V24M785.5,18V24M796.5,18V24M807.5,6.5V24M817.5,18V24M828.5,18V24M839.5,18V24M849.5,18V24M860.5,14.5V24M871.5,18V24M881.5,18V24M892.5,18V24M903.5,18V24M913.5,6.5V24M924.5,18V24M935.5,18V24M945.5,18V24M956.5,18V24M967.5,14.5V24M977.5,18V24M988.5,18V24M999.5,18V24M1009.5,18V24M1020.5,6.5V24M1031.5,18V24M1041.5,18V24M1052.5,18V24M1063.5,18V24M1073.5,14.5V24M1084.5,18V24M1095.5,18V24M1105.5,18V24M1116.5,18V24M1127.5,6.5V24M1137.5,18V24M1148.5,18V24M1159.5,18V24M1169.5,18V24M1180.5,14.5V24M1191.5,18V24M1201.5,18V24M1212.5,18V24M1223.5,18V24M1233.5,6.5V24M1244.5,18V24M1255.5,18V24M1266.5,18V24M1276.5,18V24M1287.5,14.5V24M1298.5,18V24M1308.5,18V24M1319.5,18V24M1330.5,18V24M1340.5,6.5V24M1351.5,18V24M1362.5,18V24M1372.5,18V24M1383.5,18V24M1394.5,14.5V24" stroke="#d6d6d6" stroke-width="1" fill="none"/>
<text transform="translate(62,17.2) scale(0.92,1)" x="0" y="0">-200</text>
<text transform="translate(169,17.2) scale(0.92,1)" x="0" y="0">-100</text>
<text transform="translate(276,17.2) scale(0.92,1)" x="0" y="0">0</text>
<text transform="translate(383,17.2) scale(0.92,1)" x="0" y="0">100</text>
<text transform="translate(489,17.2) scale(0.92,1)" x="0" y="0">200</text>
<text transform="translate(596,17.2) scale(0.92,1)" x="0" y="0">300</text>
<text transform="translate(703,17.2) scale(0.92,1)" x="0" y="0">400</text>
<text transform="translate(810,17.2) scale(0.92,1)" x="0" y="0">500</text>
<text transform="translate(916,17.2) scale(0.92,1)" x="0" y="0">600</text>
<text transform="translate(1023,17.2) scale(0.92,1)" x="0" y="0">700</text>
<text transform="translate(1130,17.2) scale(0.92,1)" x="0" y="0">800</text>
<text transform="translate(1236,17.2) scale(0.92,1)" x="0" y="0">900</text>
<text transform="translate(1343,17.2) scale(0.92,1)" x="0" y="0">1000</text>
<path d="M424.5,19.0h7.2l-3.6,5z" fill="#e8e8e8"/>
</svg>
<svg class="a" style="left:28.05px;top:157.5px;overflow:hidden" width="25.5" height="874.2" viewBox="0 0 25.5 874.2" font-family="Liberation Sans, sans-serif" font-size="14.2" fill="#c9c9c9">
<rect x="0" y="0" width="25.5" height="874.2" fill="#333333"/>
<rect x="0" y="10.50" width="25.50" height="853.80" fill="#1e1e1e"/>
<path d="M18.3,466.8V533.7" stroke="#2264bd" stroke-width="2"/>
<circle cx="18.3" cy="466.8" r="3.2" fill="#1e1e1e" stroke="#2264bd" stroke-width="1.6"/>
<circle cx="18.3" cy="533.7" r="3.2" fill="#1e1e1e" stroke="#2264bd" stroke-width="1.6"/>
<path d="M8,10.5H25.5M19,21.5H25.5M19,31.5H25.5M19,42.5H25.5M19,53.5H25.5M15.5,63.5H25.5M19,74.5H25.5M19,85.5H25.5M19,95.5H25.5M19,106.5H25.5M8,117.5H25.5M19,127.5H25.5M19,138.5H25.5M19,149.5H25.5M19,159.5H25.5M15.5,170.5H25.5M19,181.5H25.5M19,191.5H25.5M19,202.5H25.5M19,213.5H25.5M8,223.5H25.5M19,234.5H25.5M19,245.5H25.5M19,255.5H25.5M19,266.5H25.5M15.5,277.5H25.5M19,287.5H25.5M19,298.5H25.5M19,309.5H25.5M19,320.5H25.5M8,330.5H25.5M19,341.5H25.5M19,352.5H25.5M19,362.5H25.5M19,373.5H25.5M15.5,384.5H25.5M19,394.5H25.5M19,405.5H25.5M19,416.5H25.5M19,426.5H25.5M8,437.5H25.5M19,448.5H25.5M19,458.5H25.5M19,469.5H25.5M19,480.5H25.5M15.5,490.5H25.5M19,501.5H25.5M19,512.5H25.5M19,522.5H25.5M19,533.5H25.5M8,544.5H25.5M19,554.5H25.5M19,565.5H25.5M19,576.5H25.5M19,586.5H25.5M15.5,597.5H25.5M19,608.5H25.5M19,618.5H25.5M19,629.5H25.5M19,640.5H25.5M8,650.5H25.5M19,661.5H25.5M19,672.5H25.5M19,682.5H25.5M19,693.5H25.5M15.5,704.5H25.5M19,714.5H25.5M19,725.5H25.5M19,736.5H25.5M19,746.5H25.5M8,757.5H25.5M19,768.5H25.5M19,778.5H25.5M19,789.5H25.5M19,800.5H25.5M15.5,810.5H25.5M19,821.5H25.5M19,832.5H25.5M19,842.5H25.5M19,853.5H25.5M8,864.5H25.5" stroke="#d6d6d6" stroke-width="1" fill="none"/>
<g clip-path="url(#vc0)"><clipPath id="vc0"><rect x="0" y="12.5" width="24" height="40"/></clipPath><text transform="translate(18.4,10) rotate(-90) scale(0.92,1)" text-anchor="end" x="0" y="0">0</text></g>
<g clip-path="url(#vc100)"><clipPath id="vc100"><rect x="0" y="119.5" width="24" height="40"/></clipPath><text transform="translate(18.4,117) rotate(-90) scale(0.92,1)" text-anchor="end" x="0" y="0">100</text></g>
<g clip-path="url(#vc200)"><clipPath id="vc200"><rect x="0" y="225.5" width="24" height="40"/></clipPath><text transform="translate(18.4,223) rotate(-90) scale(0.92,1)" text-anchor="end" x="0" y="0">200</text></g>
<g clip-path="url(#vc300)"><clipPath id="vc300"><rect x="0" y="332.5" width="24" height="40"/></clipPath><text transform="translate(18.4,330) rotate(-90) scale(0.92,1)" text-anchor="end" x="0" y="0">300</text></g>
<g clip-path="url(#vc400)"><clipPath id="vc400"><rect x="0" y="439.5" width="24" height="40"/></clipPath><text transform="translate(18.4,437) rotate(-90) scale(0.92,1)" text-anchor="end" x="0" y="0">400</text></g>
<g clip-path="url(#vc500)"><clipPath id="vc500"><rect x="0" y="546.5" width="24" height="40"/></clipPath><text transform="translate(18.4,544) rotate(-90) scale(0.92,1)" text-anchor="end" x="0" y="0">500</text></g>
<g clip-path="url(#vc600)"><clipPath id="vc600"><rect x="0" y="652.5" width="24" height="40"/></clipPath><text transform="translate(18.4,650) rotate(-90) scale(0.92,1)" text-anchor="end" x="0" y="0">600</text></g>
<g clip-path="url(#vc700)"><clipPath id="vc700"><rect x="0" y="759.5" width="24" height="40"/></clipPath><text transform="translate(18.4,757) rotate(-90) scale(0.92,1)" text-anchor="end" x="0" y="0">700</text></g>
<g clip-path="url(#vc800)"><clipPath id="vc800"><rect x="0" y="866.5" width="24" height="40"/></clipPath><text transform="translate(18.4,864) rotate(-90) scale(0.92,1)" text-anchor="end" x="0" y="0">800</text></g>
<path d="M20.5,135.2v7.2l5,-3.6z" fill="#e8e8e8"/>
</svg>
<!-- p_canvas -->
<svg class="a" style="left:53.55px;top:157.5px" width="1401.45" height="874.2" viewBox="0 0 1401.45 874.2">
<defs><filter id="sh" x="-5%" y="-5%" width="110%" height="110%"><feGaussianBlur stdDeviation="2.2"/></filter><linearGradient id="topsh" x1="0" y1="0" x2="0" y2="1"><stop offset="0" stop-color="#fff" stop-opacity=".5"/><stop offset="1" stop-color="#fff" stop-opacity="0"/></linearGradient></defs>
<rect x="0" y="0" width="1401.45" height="874.2" fill="#d1d1d1"/>
<rect x="0" y="0" width="1401.45" height="9.5" fill="#d8d8d8"/>
<rect x="278.55" y="14.10" width="853.50" height="853.95" fill="#000" opacity=".55" filter="url(#sh)"/>
<rect x="275.25" y="10.80" width="853.50" height="853.95" fill="#fff"/>
<rect x="617.10" y="312.15" width="318.45" height="239.55" fill="#333"/>
<ellipse cx="685.80" cy="414.15" rx="21.30" ry="33.45" fill="#fff"/>
<ellipse cx="688.50" cy="422.85" rx="11.70" ry="12.15" fill="#000"/>
<ellipse cx="877.80" cy="475.05" rx="42.00" ry="38.10" fill="#fff"/>
<ellipse cx="882.75" cy="477.45" rx="13.35" ry="12.90" fill="#000"/>
<ellipse cx="799.95" cy="475.80" rx="16.50" ry="14.55" fill="#000"/>
<ellipse cx="740.55" cy="455.62" rx="11.85" ry="10.35" fill="#000"/>
<polygon points="658.05,466.80 817.35,525.90 817.35,528.60 659.85,533.70" fill="#fff"/>
<rect x="658.05" y="466.80" width="159.60" height="66.90" fill="none" stroke="#d8d8d8" stroke-width="1.2"/>
<rect x="658.05" y="466.80" width="159.60" height="66.90" fill="none" stroke="#0c0c78" stroke-width="1.3" stroke-dasharray="4.5 4.5"/>
<g transform="translate(650.55,457.95) rotate(-45)"><path d="M0,-8.4 L5.4,-2.8 H2.5 V2.8 H5.4 L0,8.4 L-5.4,2.8 H-2.5 V-2.8 H-5.4 Z" fill="#000" stroke="#b4b4b4" stroke-width="1.0" stroke-linejoin="miter"/></g>
<g transform="translate(737.25,455.25) rotate(0)"><path d="M0,-8.4 L5.4,-2.8 H2.5 V2.8 H5.4 L0,8.4 L-5.4,2.8 H-2.5 V-2.8 H-5.4 Z" fill="#000" stroke="#b4b4b4" stroke-width="1.0" stroke-linejoin="miter"/></g>
<g transform="translate(825.90,457.95) rotate(45)"><path d="M0,-8.4 L5.4,-2.8 H2.5 V2.8 H5.4 L0,8.4 L-5.4,2.8 H-2.5 V-2.8 H-5.4 Z" fill="#000" stroke="#b4b4b4" stroke-width="1.0" stroke-linejoin="miter"/></g>
<g transform="translate(647.10,499.65) rotate(90)"><path d="M0,-8.4 L5.4,-2.8 H2.5 V2.8 H5.4 L0,8.4 L-5.4,2.8 H-2.5 V-2.8 H-5.4 Z" fill="#000" stroke="#b4b4b4" stroke-width="1.0" stroke-linejoin="miter"/></g>
<g transform="translate(829.20,499.65) rotate(90)"><path d="M0,-8.4 L5.4,-2.8 H2.5 V2.8 H5.4 L0,8.4 L-5.4,2.8 H-2.5 V-2.8 H-5.4 Z" fill="#000" stroke="#b4b4b4" stroke-width="1.0" stroke-linejoin="miter"/></g>
<g transform="translate(650.55,541.95) rotate(45)"><path d="M0,-8.4 L5.4,-2.8 H2.5 V2.8 H5.4 L0,8.4 L-5.4,2.8 H-2.5 V-2.8 H-5.4 Z" fill="#000" stroke="#b4b4b4" stroke-width="1.0" stroke-linejoin="miter"/></g>
<g transform="translate(737.70,544.05) rotate(0)"><path d="M0,-8.4 L5.4,-2.8 H2.5 V2.8 H5.4 L0,8.4 L-5.4,2.8 H-2.5 V-2.8 H-5.4 Z" fill="#000" stroke="#b4b4b4" stroke-width="1.0" stroke-linejoin="miter"/></g>
<g transform="translate(825.90,541.95) rotate(-45)"><path d="M0,-8.4 L5.4,-2.8 H2.5 V2.8 H5.4 L0,8.4 L-5.4,2.8 H-2.5 V-2.8 H-5.4 Z" fill="#000" stroke="#b4b4b4" stroke-width="1.0" stroke-linejoin="miter"/></g>
<rect x="0" y="872.85" width="1401.45" height="1.4" fill="#e4e4e4"/>
</svg>
<!-- p_panel -->
<div style="left:1490px;top:134px;width:430.5px;height:41.5px;background:#2e2e2e"></div>
<div style="left:1697px;top:135px;width:158.5px;height:40.5px;background:#333333"></div>
<div style="left:1697px;top:172px;width:158.5px;height:4px;background:#1a5fb4"></div>
<svg class="i" style="left:1510.05px;top:148.65px;" width="16.5" height="16.5" viewBox="0 0 16 16" ><path d="M2.4,1.8H12l-1.6,3H0.8z" fill="#1a9fff"/><path d="M4.2,6.6H13.8l-1.6,3H2.6z" fill="#8ccff7"/><path d="M6,11.4H15.6l-1.6,3H4.4z" fill="#f2f2f2"/></svg>
<div class="t" style="left:1530.38px;top:149.75px;font-size:16.95px;line-height:1;letter-spacing:0;color:#626262;transform:scaleX(0.857);transform-origin:0 0;">Layers and Objects</div>
<svg class="a" style="left:1660.9px;top:150.6px" width="12" height="12" viewBox="-6 -6 12 12"><path d="M-3.6,-3.6L3.6,3.6M3.6,-3.6L-3.6,3.6" stroke="#d0d0d0" stroke-width="1.7" fill="none"/></svg>
<svg class="i" style="left:1708.3px;top:148.3px;" width="16" height="16" viewBox="0 0 16 16" ><path d="M1.2,13V1.2H13.6" fill="none" stroke="#c4c4c4" stroke-width="1.6"/><path d="M15.4,1.8L7,10.6" stroke="#f2f2f2" stroke-width="2.6" stroke-linecap="round"/><path d="M6.8,10.2l1.6,1.6c-0.4,2.2 -2.4,3.6 -5.2,3.4c1.6,-1 1.2,-3.6 3.6,-5z" fill="#1a9bf0"/></svg>
<div class="t" style="left:1729.28px;top:149.75px;font-size:16.95px;line-height:1;letter-spacing:0;color:#848484;transform:scaleX(0.861);transform-origin:0 0;">Fill and Stroke</div>
<svg class="a" style="left:1828.8px;top:150.6px" width="12" height="12" viewBox="-6 -6 12 12"><path d="M-3.6,-3.6L3.6,3.6M3.6,-3.6L-3.6,3.6" stroke="#d8d8d8" stroke-width="1.7" fill="none"/></svg>
<svg class="a" style="left:1900px;top:152.5px" width="14" height="8" viewBox="0 0 14 8"><path d="M1,1L7,7L13,1" fill="none" stroke="#cfcfcf" stroke-width="1.7"/></svg>
<div style="left:1506.5px;top:185px;width:13px;height:12.5px;background:#eaeaea;border-radius:1px"></div>
<div class="t" style="left:1525.88px;top:184.70px;font-size:16.95px;line-height:1;letter-spacing:0;color:#7c7c7c;transform:scaleX(0.887);transform-origin:0 0;">Fill</div>
<div style="left:1498px;top:202px;width:53.5px;height:3.5px;background:#1a5fb4"></div>
<div style="left:1568px;top:185px;width:13px;height:12.5px;box-shadow:inset 0 0 0 1.6px #d8d8d8;border-radius:1px"></div>
<div class="t" style="left:1586.78px;top:184.70px;font-size:16.95px;line-height:1;letter-spacing:0;color:#5e5e5e;transform:scaleX(0.886);transform-origin:0 0;">Stroke paint</div>
<svg class="i" style="left:1688.4px;top:183.6px;" width="15" height="15" viewBox="0 0 16 16" ><path d="M1,3H11" stroke="#1a9bf0" stroke-width="2"/><path d="M10,0.2L14.6,3L10,5.8z" fill="#1a9bf0"/><path d="M1,8.6H5M7,8.6H11M12.6,8.6H14.6" stroke="#c8c8c8" stroke-width="1.6"/><path d="M0.6,13.4H15" stroke="#f2f2f2" stroke-width="2"/></svg>
<div class="t" style="left:1707.68px;top:184.70px;font-size:16.95px;line-height:1;letter-spacing:0;color:#5e5e5e;transform:scaleX(0.861);transform-origin:0 0;">Stroke style</div>
<div style="left:1490px;top:206px;width:430.5px;height:1px;background:#2a2a2a"></div>
<svg class="a" style="left:1503.3px;top:216.6px" width="12" height="12" viewBox="-6 -6 12 12"><path d="M-3.9,-3.9L3.9,3.9M3.9,-3.9L-3.9,3.9" stroke="#f2f2f2" stroke-width="2" fill="none"/></svg>
<div style="left:1524.5px;top:210px;width:26px;height:25.5px;background:#1d4a86;border-radius:4px"></div>
<div style="left:1529.5px;top:215px;width:16px;height:16px;background:#1a9bf0"></div>
<svg class="a" style="left:1557.3px;top:214.5px" width="16.5" height="16.5" viewBox="0 0 16 16"><defs><linearGradient id="pl"><stop offset="0" stop-color="#1a9bf0"/><stop offset="1" stop-color="#f6fbff"/></linearGradient></defs><rect width="16" height="16" fill="url(#pl)"/></svg>
<svg class="a" style="left:1585.5px;top:214.5px" width="16.5" height="16.5" viewBox="0 0 16 16"><defs><radialGradient id="pr"><stop offset="0" stop-color="#1a9bf0"/><stop offset="0.35" stop-color="#1a9bf0"/><stop offset="1" stop-color="#f6fbff"/></radialGradient></defs><rect width="16" height="16" fill="url(#pr)"/></svg>
<svg class="a" style="left:1613.7px;top:214.5px" width="16.5" height="16.5" viewBox="0 0 16 16"><defs><linearGradient id="pm" x1="0" y1="0" x2="1" y2="1"><stop offset="0.05" stop-color="#1a9bf0"/><stop offset=".24" stop-color="#58b6f4"/><stop offset=".42" stop-color="#f6fbff"/><stop offset=".58" stop-color="#f6fbff"/><stop offset=".76" stop-color="#58b6f4"/><stop offset="0.95" stop-color="#1a9bf0"/></linearGradient></defs><rect width="16" height="16" fill="url(#pm)"/></svg>
<svg class="a" style="left:1641.3px;top:214.5px" width="16.5" height="16.5" viewBox="0 0 16 16"><rect width="16" height="16" fill="#f4f4f4"/><g fill="#2a2a2a"><path d="M4.2,1L7.4,4.2L4.2,7.4L1,4.2zM11.8,1L15,4.2L11.8,7.4L8.6,4.2zM4.2,8.6L7.4,11.8L4.2,15L1,11.8zM11.8,8.6L15,11.8L11.8,15L8.6,11.8z"/></g></svg>
<svg class="a" style="left:1669.5px;top:214.5px" width="16.5" height="16.5" viewBox="0 0 16 16"><rect x="0.8" y="0.8" width="14.4" height="14.4" fill="#2a2a2a" stroke="#e0e0e0" stroke-width="1.5"/><rect x="3.6" y="3.6" width="8.8" height="8.8" fill="#1a9bf0"/></svg>
<div class="t" style="left:1699.58px;top:214.31px;font-size:20.25px;line-height:1;letter-spacing:0;color:#f2f2f2;transform:scaleX(0.994);transform-origin:0 0; font-weight:bold;-webkit-text-stroke:0;">?</div>
<svg class="i" style="left:1865.9px;top:214.1px;" width="17" height="17" viewBox="0 0 16 16" ><path d="M1.2,3.6C1.2,1.6 3.2,0.6 5,1.6C6.4,2.4 7.2,3 8,3S9.6,2.4 11,1.6C12.8,0.6 14.8,1.6 14.8,3.6C14.8,9 12,14.8 8,14.8S1.2,9 1.2,3.6z" fill="#f2f2f2"/><path d="M8,5.6C9.4,7.8 10,9 10,10A2,2 0 0 1 6,10C6,9 6.6,7.8 8,5.6z" fill="#262626"/></svg>
<div style="left:1890px;top:210px;width:25.5px;height:25.5px;background:#1d4a86;border-radius:4px"></div>
<svg class="i" style="left:1894.4px;top:214.1px;" width="17" height="17" viewBox="0 0 16 16" ><path d="M1.2,3.6C1.2,1.6 3.2,0.6 5,1.6C6.4,2.4 7.2,3 8,3S9.6,2.4 11,1.6C12.8,0.6 14.8,1.6 14.8,3.6C14.8,9 12,14.8 8,14.8S1.2,9 1.2,3.6z" fill="#f2f2f2"/></svg>
<div class="t" style="left:1497.67px;top:257.00px;font-size:16.95px;line-height:1;letter-spacing:0;color:#b4b4b4;transform:scaleX(0.865);transform-origin:0 0; font-weight:bold;-webkit-text-stroke:0;">Flat color</div>
<div style="left:1811px;top:248px;width:102.5px;height:32px;background:#313131;border-radius:5px;box-shadow:inset 0 0 0 1px #2d2d2d"></div>
<svg class="a" style="left:1821.6px;top:257.4px" width="16" height="12" viewBox="0 0 16 12"><defs><linearGradient id="rb"><stop offset="0" stop-color="#ff2020"/><stop offset=".2" stop-color="#ffe000"/><stop offset=".4" stop-color="#20e020"/><stop offset=".6" stop-color="#20d0ff"/><stop offset=".8" stop-color="#4040ff"/><stop offset="1" stop-color="#ff20e0"/></linearGradient></defs><rect width="16" height="12" rx="1" fill="url(#rb)"/></svg>
<div class="t" style="left:1845.38px;top:256.70px;font-size:16.95px;line-height:1;letter-spacing:0;color:#7c7c7c;transform:scaleX(0.837);transform-origin:0 0;">HSL</div>
<svg class="a" style="left:1890.9px;top:260.1px" width="13" height="8" viewBox="0 0 13 8"><path d="M0.5,0.5H12.5L6.5,7.5z" fill="#9a9a9a"/></svg>
<svg class="a" style="left:1505.7px;top:291.6px" width="7" height="12" viewBox="0 0 7 12"><path d="M0.5,0.5L6.5,6L0.5,11.5z" fill="#9a9a9a"/></svg>
<div style="left:1521.3px;top:289.5px;width:17px;height:17px;border-radius:50%;background:conic-gradient(#a020f0,#2848ff,#00b8e0,#20d040,#f0f000,#ff8800,#ff2020,#ff20c0,#a020f0)"></div>
<div style="left:1526.8px;top:295.0px;width:6px;height:6px;border-radius:50%;background:#303030"></div>
<div class="t" style="left:1542.68px;top:291.50px;font-size:16.95px;line-height:1;letter-spacing:0;color:#7a7a7a;transform:scaleX(0.891);transform-origin:0 0;">Color Wheel</div>
<div class="t" style="left:1500.67px;top:324.20px;font-size:16.95px;line-height:1;letter-spacing:0;color:#6e6e6e;transform:scaleX(0.885);transform-origin:0 0;">H:</div>
<svg class="a" style="left:1519.8px;top:314.1px" width="315.6" height="34.0" viewBox="0 0 315.6 34.0"><defs><linearGradient id="g209"><stop offset="0" stop-color="#f00"/><stop offset=".1667" stop-color="#ff0"/><stop offset=".3333" stop-color="#0f0"/><stop offset=".5" stop-color="#0ff"/><stop offset=".6667" stop-color="#00f"/><stop offset=".8333" stop-color="#f0f"/><stop offset="1" stop-color="#f00"/></linearGradient></defs><rect x="0" y="0" width="315.6" height="34.0" fill="url(#g209)"/><path d="M-1.8,0H4.2L1.2,3.6zM-1.8,34.0H4.2L1.2,30.4z" fill="#fff" stroke="#222" stroke-width=".8" opacity=".9"/></svg>
<div style="left:1840.5px;top:314px;width:71px;height:34.5px;background:#2d2d2d;border-radius:5px;box-shadow:inset 0 0 0 1px #2a2a2a"></div>
<div class="t" style="left:1846.58px;top:324.20px;font-size:16.95px;line-height:1;letter-spacing:0.17px;color:#bababa;transform:scaleX(1.000);transform-origin:0 0;">0</div>
<svg class="a" style="left:1882.2px;top:323.4px" width="12.6" height="15" viewBox="0 0 12.6 15"><path d="M0,7.5H12.6" stroke="#454545" stroke-width="1.5"/></svg><svg class="a" style="left:1896.9px;top:323.4px" width="12.6" height="15" viewBox="0 0 12.6 15"><path d="M0,7.5H12.6M6.3,0.5V14.5" stroke="#a8a8a8" stroke-width="1.5" fill="none"/></svg>
<div class="t" style="left:1500.67px;top:362.30px;font-size:16.95px;line-height:1;letter-spacing:0;color:#6e6e6e;transform:scaleX(0.937);transform-origin:0 0;">S:</div>
<svg class="a" style="left:1519.8px;top:352.2px" width="315.6" height="34.0" viewBox="0 0 315.6 34.0"><defs><linearGradient id="g234"><stop offset="0" stop-color="#fff"/><stop offset="1" stop-color="#fff"/></linearGradient></defs><rect x="0" y="0" width="315.6" height="34.0" fill="url(#g234)"/><path d="M-1.8,0H4.2L1.2,3.6zM-1.8,34.0H4.2L1.2,30.4z" fill="#fff" stroke="#222" stroke-width=".8" opacity=".9"/></svg>
<div style="left:1840.5px;top:352px;width:71px;height:34.5px;background:#2d2d2d;border-radius:5px;box-shadow:inset 0 0 0 1px #2a2a2a"></div>
<div class="t" style="left:1846.58px;top:362.30px;font-size:16.95px;line-height:1;letter-spacing:0.17px;color:#bababa;transform:scaleX(1.000);transform-origin:0 0;">0</div>
<svg class="a" style="left:1882.2px;top:361.5px" width="12.6" height="15" viewBox="0 0 12.6 15"><path d="M0,7.5H12.6" stroke="#454545" stroke-width="1.5"/></svg><svg class="a" style="left:1896.9px;top:361.5px" width="12.6" height="15" viewBox="0 0 12.6 15"><path d="M0,7.5H12.6M6.3,0.5V14.5" stroke="#a8a8a8" stroke-width="1.5" fill="none"/></svg>
<div class="t" style="left:1500.67px;top:400.40px;font-size:16.95px;line-height:1;letter-spacing:0.43px;color:#6e6e6e;transform:scaleX(1.000);transform-origin:0 0;">L:</div>
<svg class="a" style="left:1519.8px;top:390.3px" width="315.6" height="34.0" viewBox="0 0 315.6 34.0"><defs><linearGradient id="g260"><stop offset="0" stop-color="#000"/><stop offset="1" stop-color="#fff"/></linearGradient></defs><rect x="0" y="0" width="315.6" height="34.0" fill="url(#g260)"/><path d="M311.1,0H317.1L314.1,3.6zM311.1,34.0H317.1L314.1,30.4z" fill="#fff" stroke="#222" stroke-width=".8" opacity=".9"/></svg>
<div style="left:1840.5px;top:390px;width:71px;height:34.5px;background:#2d2d2d;border-radius:5px;box-shadow:inset 0 0 0 1px #2a2a2a"></div>
<div class="t" style="left:1847.48px;top:400.40px;font-size:16.95px;line-height:1;letter-spacing:0;color:#bababa;transform:scaleX(0.870);transform-origin:0 0;">100</div>
<svg class="a" style="left:1881.9px;top:399.6px" width="12.6" height="15" viewBox="0 0 12.6 15"><path d="M0,7.5H12.6" stroke="#a8a8a8" stroke-width="1.5"/></svg><svg class="a" style="left:1899.6px;top:399.6px" width="12.6" height="15" viewBox="0 0 12.6 15"><path d="M0,7.5H12.6M6.3,0.5V14.5" stroke="#454545" stroke-width="1.5" fill="none"/></svg>
<div class="t" style="left:1500.67px;top:438.50px;font-size:16.95px;line-height:1;letter-spacing:0;color:#6e6e6e;transform:scaleX(0.937);transform-origin:0 0;">A:</div>
<svg class="a" style="left:1519.8px;top:428.4px" width="315.6" height="34.0" viewBox="0 0 315.6 34.0"><defs><linearGradient id="g285"><stop offset="0" stop-color="#fff" stop-opacity="0"/><stop offset="1" stop-color="#fff" stop-opacity="1"/></linearGradient></defs><defs><pattern id="chk" width="18" height="18" patternUnits="userSpaceOnUse"><rect width="18" height="18" fill="#a6a6a6"/><rect width="9" height="9" fill="#6c6c6c"/><rect x="9" y="9" width="9" height="9" fill="#6c6c6c"/></pattern></defs><rect x="0" y="0" width="315.6" height="34.0" fill="url(#chk)"/><rect x="0" y="0" width="315.6" height="34.0" fill="url(#g285)"/><path d="M311.1,0H317.1L314.1,3.6zM311.1,34.0H317.1L314.1,30.4z" fill="#fff" stroke="#222" stroke-width=".8" opacity=".9"/></svg>
<div style="left:1840.5px;top:428px;width:71px;height:34.5px;background:#2d2d2d;border-radius:5px;box-shadow:inset 0 0 0 1px #2a2a2a"></div>
<div class="t" style="left:1847.48px;top:438.50px;font-size:16.95px;line-height:1;letter-spacing:0;color:#bababa;transform:scaleX(0.870);transform-origin:0 0;">100</div>
<svg class="a" style="left:1881.9px;top:437.7px" width="12.6" height="15" viewBox="0 0 12.6 15"><path d="M0,7.5H12.6" stroke="#a8a8a8" stroke-width="1.5"/></svg><svg class="a" style="left:1899.6px;top:437.7px" width="12.6" height="15" viewBox="0 0 12.6 15"><path d="M0,7.5H12.6M6.3,0.5V14.5" stroke="#454545" stroke-width="1.5" fill="none"/></svg>
<svg class="i" style="left:1497.1px;top:915.4px;" width="16" height="16" viewBox="0 0 16 16" ><g fill="none" stroke="#6a6a6a" stroke-width="1.5"><circle cx="8" cy="5" r="3.6"/><circle cx="4.6" cy="10.6" r="3.6"/><circle cx="11.4" cy="10.6" r="3.6"/></g><circle cx="4.6" cy="10.6" r="1.8" fill="#2f7a3c"/><circle cx="11.4" cy="10.6" r="1.8" fill="#9a2f6e"/></svg>
<svg class="i" style="left:1517.5px;top:915.4px;" width="16" height="16" viewBox="0 0 16 16" ><g fill="none" stroke="#4c4c4c" stroke-width="1.4"><circle cx="8" cy="8" r="6.6"/><circle cx="8" cy="8" r="2.6"/></g></svg>
<svg class="i" style="left:1548.1px;top:915.4px;" width="16" height="16" viewBox="0 0 16 16" ><path d="M2.6,0.8C4.2,3 4.8,4 4.8,5A2.2,2.2 0 0 1 0.4,5C0.4,4 1,3 2.6,0.8z" fill="#1a9fff"/><path d="M4,14.6L5,11L11,5L13.4,7.4L7.4,13.4z" fill="none" stroke="#f2f2f2" stroke-width="1.6" stroke-linejoin="round"/><path d="M10.4,3.8L12.6,1.6a1.8,1.8 0 0 1 2.6,2.6L13,6.4z" fill="#f2f2f2" stroke="#f2f2f2" stroke-width="1.2"/></svg>
<div class="t" style="left:1786.28px;top:916.10px;font-size:16.95px;line-height:1;letter-spacing:0;color:#727272;transform:scaleX(0.808);transform-origin:0 0;">RGBA:</div>
<div style="left:1833px;top:907.5px;width:79px;height:31px;background:#2d2d2d;border-radius:5px;box-shadow:inset 0 0 0 1px #2a2a2a"></div>
<div class="t" style="left:1840.88px;top:916.10px;font-size:16.95px;line-height:1;letter-spacing:0.73px;color:#bababa;transform:scaleX(1.000);transform-origin:0 0;">ffffffff</div>
<div style="left:1490px;top:944.5px;width:430.5px;height:1px;background:#292929"></div>
<div class="t" style="left:1704.68px;top:959.00px;font-size:16.95px;line-height:1;letter-spacing:0;color:#727272;transform:scaleX(0.892);transform-origin:0 0;">Blend mode:</div>
<div style="left:1794.5px;top:950px;width:123px;height:32px;background:#313131;border-radius:5px;box-shadow:inset 0 0 0 1px #2d2d2d"></div>
<div class="t" style="left:1804.28px;top:959.00px;font-size:16.95px;line-height:1;letter-spacing:0;color:#727272;transform:scaleX(0.934);transform-origin:0 0;">Normal</div>
<svg class="a" style="left:1895.1px;top:962.1px" width="12" height="8" viewBox="0 0 12 8"><path d="M0.5,0.5H11.5L6,7.5z" fill="#9a9a9a"/></svg>
<div style="left:1495px;top:986.5px;width:343.5px;height:25px;background:#2d2d2d;box-shadow:inset 1.5px 0 0 #1b1f27, inset 0 0 0 1px #262626"></div>
<div class="t" style="left:1499.47px;top:992.60px;font-size:16.95px;line-height:1;letter-spacing:0;color:#bdbdbd;transform:scaleX(0.863);transform-origin:0 0;">Blur (%)</div>
<div style="left:1839px;top:986.5px;width:81px;height:25px;background:#2d2d2d;box-shadow:inset 0 0 0 1px #2a2a2a"></div>
<div class="t" style="left:1846.58px;top:992.60px;font-size:16.95px;line-height:1;letter-spacing:0;color:#b4b4b4;transform:scaleX(0.878);transform-origin:0 0;">0,0</div>
<svg class="a" style="left:1882.8px;top:992.1px" width="13.2" height="15" viewBox="0 0 13.2 15"><path d="M0,7.5H13.2" stroke="#454545" stroke-width="1.5"/></svg><svg class="a" style="left:1901.7px;top:992.1px" width="13.2" height="15" viewBox="0 0 13.2 15"><path d="M0,7.5H13.2M6.6,0.5V14.5" stroke="#a8a8a8" stroke-width="1.5" fill="none"/></svg>
<div style="left:1495px;top:1019px;width:343.5px;height:24.5px;background:#15539e;box-shadow:inset 0 0 0 1px #0f3a72"></div>
<div class="t" style="left:1499.47px;top:1023.80px;font-size:16.95px;line-height:1;letter-spacing:0;color:#f0f0f0;transform:scaleX(0.871);transform-origin:0 0;">Opacity (%)</div>
<div style="left:1839px;top:1019px;width:81px;height:24.5px;background:#2d2d2d;box-shadow:inset 0 0 0 1px #2a2a2a"></div>
<div class="t" style="left:1847.48px;top:1023.80px;font-size:16.95px;line-height:1;letter-spacing:0;color:#b4b4b4;transform:scaleX(0.870);transform-origin:0 0;">100,0</div>
<svg class="a" style="left:1886.4px;top:1023.6px" width="11.1" height="15" viewBox="0 0 11.1 15"><path d="M0,7.5H11.1" stroke="#a8a8a8" stroke-width="1.5"/></svg><svg class="a" style="left:1904.1px;top:1023.6px" width="11.1" height="15" viewBox="0 0 11.1 15"><path d="M0,7.5H11.1M5.55,0.5V14.5" stroke="#454545" stroke-width="1.5" fill="none"/></svg>
<!-- p_palette -->
<svg class="a" style="left:0;top:1055px" width="1920" height="36" viewBox="0 1055 1920 36" shape-rendering="auto">
<rect x="1.5" y="1056" width="33.5" height="33" fill="#fff"/>
<path d="M3.5,1058.5L33.0,1086.5M33.0,1058.5L3.5,1086.5" stroke="#d2213c" stroke-width="2.8" fill="none"/>
<rect x="35.5" y="1056" width="33.5" height="33" fill="#000"/>
<rect x="69.5" y="1056" width="33.5" height="33" fill="#808080"/>
<rect x="103.5" y="1056" width="33.5" height="33" fill="#fff"/>
<circle cx="119.95" cy="1072.5" r="5.6" fill="#b3b3b3"/>
<rect x="138.00" y="1056.4" width="21.05" height="15.7" fill="#1a1a1a"/>
<rect x="160.05" y="1056.4" width="21.05" height="15.7" fill="#333333"/>
<rect x="182.10" y="1056.4" width="21.05" height="15.7" fill="#4d4d4d"/>
<rect x="204.15" y="1056.4" width="21.05" height="15.7" fill="#666666"/>
<rect x="226.20" y="1056.4" width="21.05" height="15.7" fill="#999999"/>
<rect x="248.25" y="1056.4" width="21.05" height="15.7" fill="#b3b3b3"/>
<rect x="270.30" y="1056.4" width="21.05" height="15.7" fill="#cccccc"/>
<rect x="292.35" y="1056.4" width="21.05" height="15.7" fill="#e6e6e6"/>
<rect x="314.40" y="1056.4" width="21.05" height="15.7" fill="#ececec"/>
<rect x="336.45" y="1056.4" width="21.05" height="15.7" fill="#f2f2f2"/>
<rect x="358.50" y="1056.4" width="21.05" height="15.7" fill="#f9f9f9"/>
<rect x="380.55" y="1056.4" width="21.05" height="15.7" fill="#800000"/>
<rect x="402.60" y="1056.4" width="21.05" height="15.7" fill="#ff0000"/>
<rect x="424.65" y="1056.4" width="21.05" height="15.7" fill="#808000"/>
<rect x="446.70" y="1056.4" width="21.05" height="15.7" fill="#ffff00"/>
<rect x="468.75" y="1056.4" width="21.05" height="15.7" fill="#008000"/>
<rect x="490.80" y="1056.4" width="20.10" height="15.7" fill="#00ff00"/>
<rect x="511.90" y="1056.4" width="20.10" height="15.7" fill="#008080"/>
<rect x="533.00" y="1056.4" width="20.10" height="15.7" fill="#00ffff"/>
<rect x="554.10" y="1056.4" width="20.10" height="15.7" fill="#000080"/>
<rect x="575.20" y="1056.4" width="20.10" height="15.7" fill="#0000ff"/>
<rect x="596.30" y="1056.4" width="20.10" height="15.7" fill="#800080"/>
<rect x="617.40" y="1056.4" width="20.10" height="15.7" fill="#ff00ff"/>
<rect x="638.50" y="1056.4" width="20.10" height="15.7" fill="#2b0000"/>
<rect x="659.60" y="1056.4" width="20.10" height="15.7" fill="#550000"/>
<rect x="680.70" y="1056.4" width="20.10" height="15.7" fill="#800000"/>
<rect x="701.80" y="1056.4" width="20.10" height="15.7" fill="#aa0000"/>
<rect x="722.90" y="1056.4" width="20.10" height="15.7" fill="#d40000"/>
<rect x="744.00" y="1056.4" width="20.10" height="15.7" fill="#ff0000"/>
<rect x="765.10" y="1056.4" width="20.10" height="15.7" fill="#ff2a2a"/>
<rect x="786.20" y="1056.4" width="20.10" height="15.7" fill="#ff5555"/>
<rect x="807.30" y="1056.4" width="20.10" height="15.7" fill="#ff8080"/>
<rect x="828.40" y="1056.4" width="20.10" height="15.7" fill="#ffaaaa"/>
<rect x="849.50" y="1056.4" width="20.10" height="15.7" fill="#ffd5d5"/>
<rect x="870.60" y="1056.4" width="20.10" height="15.7" fill="#280b0b"/>
<rect x="891.70" y="1056.4" width="20.10" height="15.7" fill="#501616"/>
<rect x="912.80" y="1056.4" width="20.10" height="15.7" fill="#782121"/>
<rect x="933.90" y="1056.4" width="20.10" height="15.7" fill="#a02c2c"/>
<rect x="955.00" y="1056.4" width="20.10" height="15.7" fill="#c83737"/>
<rect x="976.10" y="1056.4" width="20.10" height="15.7" fill="#d35f5f"/>
<rect x="997.20" y="1056.4" width="20.10" height="15.7" fill="#de8787"/>
<rect x="1018.30" y="1056.4" width="20.10" height="15.7" fill="#e9afaf"/>
<rect x="1039.40" y="1056.4" width="20.10" height="15.7" fill="#f4d7d7"/>
<rect x="1060.50" y="1056.4" width="20.10" height="15.7" fill="#241c1c"/>
<rect x="1081.60" y="1056.4" width="20.10" height="15.7" fill="#483737"/>
<rect x="1102.70" y="1056.4" width="20.10" height="15.7" fill="#6c5353"/>
<rect x="1123.80" y="1056.4" width="20.10" height="15.7" fill="#916f6f"/>
<rect x="1144.90" y="1056.4" width="20.10" height="15.7" fill="#ac9393"/>
<rect x="1166.00" y="1056.4" width="20.10" height="15.7" fill="#c8b7b7"/>
<rect x="1187.10" y="1056.4" width="20.10" height="15.7" fill="#e3dbdb"/>
<rect x="1208.20" y="1056.4" width="20.10" height="15.7" fill="#2b1100"/>
<rect x="1229.30" y="1056.4" width="20.10" height="15.7" fill="#552200"/>
<rect x="1250.40" y="1056.4" width="20.10" height="15.7" fill="#803300"/>
<rect x="1271.50" y="1056.4" width="20.10" height="15.7" fill="#aa4400"/>
<rect x="1292.60" y="1056.4" width="20.10" height="15.7" fill="#d45500"/>
<rect x="1313.70" y="1056.4" width="20.10" height="15.7" fill="#ff6600"/>
<rect x="1334.80" y="1056.4" width="20.10" height="15.7" fill="#ff7f2a"/>
<rect x="1355.90" y="1056.4" width="20.10" height="15.7" fill="#ff9955"/>
<rect x="1377.00" y="1056.4" width="20.10" height="15.7" fill="#ffb380"/>
<rect x="1398.10" y="1056.4" width="20.10" height="15.7" fill="#ffccaa"/>
<rect x="1419.20" y="1056.4" width="20.10" height="15.7" fill="#ffe6d5"/>
<rect x="1440.30" y="1056.4" width="20.10" height="15.7" fill="#28170b"/>
<rect x="1461.40" y="1056.4" width="20.10" height="15.7" fill="#502d16"/>
<rect x="1482.50" y="1056.4" width="20.10" height="15.7" fill="#784421"/>
<rect x="1503.60" y="1056.4" width="20.10" height="15.7" fill="#a05a2c"/>
<rect x="1524.70" y="1056.4" width="20.10" height="15.7" fill="#c87137"/>
<rect x="1545.80" y="1056.4" width="20.10" height="15.7" fill="#d38d5f"/>
<rect x="1566.90" y="1056.4" width="20.10" height="15.7" fill="#deaa87"/>
<rect x="1588.00" y="1056.4" width="20.10" height="15.7" fill="#e9c6af"/>
<rect x="1609.10" y="1056.4" width="20.10" height="15.7" fill="#f4e3d7"/>
<rect x="1630.20" y="1056.4" width="20.10" height="15.7" fill="#241f1c"/>
<rect x="1651.30" y="1056.4" width="20.10" height="15.7" fill="#483e37"/>
<rect x="1672.40" y="1056.4" width="20.10" height="15.7" fill="#6c5d53"/>
<rect x="1693.50" y="1056.4" width="20.10" height="15.7" fill="#917c6f"/>
<rect x="1714.60" y="1056.4" width="20.10" height="15.7" fill="#ac9d93"/>
<rect x="1735.70" y="1056.4" width="20.10" height="15.7" fill="#c8beb7"/>
<rect x="1756.80" y="1056.4" width="20.10" height="15.7" fill="#e3dedb"/>
<rect x="1777.90" y="1056.4" width="20.10" height="15.7" fill="#2b2200"/>
<rect x="1799.00" y="1056.4" width="20.10" height="15.7" fill="#554400"/>
<rect x="1820.10" y="1056.4" width="20.10" height="15.7" fill="#806600"/>
<rect x="1841.20" y="1056.4" width="20.10" height="15.7" fill="#aa8800"/>
<rect x="138.00" y="1072.9" width="21.05" height="15.7" fill="#d4aa00"/>
<rect x="160.05" y="1072.9" width="21.05" height="15.7" fill="#ffcc00"/>
<rect x="182.10" y="1072.9" width="21.05" height="15.7" fill="#ffd42a"/>
<rect x="204.15" y="1072.9" width="21.05" height="15.7" fill="#ffdd55"/>
<rect x="226.20" y="1072.9" width="21.05" height="15.7" fill="#ffe680"/>
<rect x="248.25" y="1072.9" width="21.05" height="15.7" fill="#ffeeaa"/>
<rect x="270.30" y="1072.9" width="21.05" height="15.7" fill="#fff6d5"/>
<rect x="292.35" y="1072.9" width="21.05" height="15.7" fill="#28220b"/>
<rect x="314.40" y="1072.9" width="21.05" height="15.7" fill="#504416"/>
<rect x="336.45" y="1072.9" width="21.05" height="15.7" fill="#786721"/>
<rect x="358.50" y="1072.9" width="21.05" height="15.7" fill="#a0892c"/>
<rect x="380.55" y="1072.9" width="21.05" height="15.7" fill="#c8ab37"/>
<rect x="402.60" y="1072.9" width="21.05" height="15.7" fill="#d3bc5f"/>
<rect x="424.65" y="1072.9" width="21.05" height="15.7" fill="#decd87"/>
<rect x="446.70" y="1072.9" width="21.05" height="15.7" fill="#e9ddaf"/>
<rect x="468.75" y="1072.9" width="21.05" height="15.7" fill="#f4eed7"/>
<rect x="490.80" y="1072.9" width="20.10" height="15.7" fill="#24221c"/>
<rect x="511.90" y="1072.9" width="20.10" height="15.7" fill="#484537"/>
<rect x="533.00" y="1072.9" width="20.10" height="15.7" fill="#6c6753"/>
<rect x="554.10" y="1072.9" width="20.10" height="15.7" fill="#918a6f"/>
<rect x="575.20" y="1072.9" width="20.10" height="15.7" fill="#aca793"/>
<rect x="596.30" y="1072.9" width="20.10" height="15.7" fill="#c8c4b7"/>
<rect x="617.40" y="1072.9" width="20.10" height="15.7" fill="#e3e2db"/>
<rect x="638.50" y="1072.9" width="20.10" height="15.7" fill="#222b00"/>
<rect x="659.60" y="1072.9" width="20.10" height="15.7" fill="#445500"/>
<rect x="680.70" y="1072.9" width="20.10" height="15.7" fill="#668000"/>
<rect x="701.80" y="1072.9" width="20.10" height="15.7" fill="#88aa00"/>
<rect x="722.90" y="1072.9" width="20.10" height="15.7" fill="#aad400"/>
<rect x="744.00" y="1072.9" width="20.10" height="15.7" fill="#ccff00"/>
<rect x="765.10" y="1072.9" width="20.10" height="15.7" fill="#d4ff2a"/>
<rect x="786.20" y="1072.9" width="20.10" height="15.7" fill="#ddff55"/>
<rect x="807.30" y="1072.9" width="20.10" height="15.7" fill="#e5ff80"/>
<rect x="828.40" y="1072.9" width="20.10" height="15.7" fill="#eeffaa"/>
<rect x="849.50" y="1072.9" width="20.10" height="15.7" fill="#f6ffd5"/>
<rect x="870.60" y="1072.9" width="20.10" height="15.7" fill="#22280b"/>
<rect x="891.70" y="1072.9" width="20.10" height="15.7" fill="#445016"/>
<rect x="912.80" y="1072.9" width="20.10" height="15.7" fill="#677821"/>
<rect x="933.90" y="1072.9" width="20.10" height="15.7" fill="#89a02c"/>
<rect x="955.00" y="1072.9" width="20.10" height="15.7" fill="#abc837"/>
<rect x="976.10" y="1072.9" width="20.10" height="15.7" fill="#bcd35f"/>
<rect x="997.20" y="1072.9" width="20.10" height="15.7" fill="#cdde87"/>
<rect x="1018.30" y="1072.9" width="20.10" height="15.7" fill="#dde9af"/>
<rect x="1039.40" y="1072.9" width="20.10" height="15.7" fill="#eef4d7"/>
<rect x="1060.50" y="1072.9" width="20.10" height="15.7" fill="#22241c"/>
<rect x="1081.60" y="1072.9" width="20.10" height="15.7" fill="#454837"/>
<rect x="1102.70" y="1072.9" width="20.10" height="15.7" fill="#676c53"/>
<rect x="1123.80" y="1072.9" width="20.10" height="15.7" fill="#8a916f"/>
<rect x="1144.90" y="1072.9" width="20.10" height="15.7" fill="#a7ac93"/>
<rect x="1166.00" y="1072.9" width="20.10" height="15.7" fill="#c4c8b7"/>
<rect x="1187.10" y="1072.9" width="20.10" height="15.7" fill="#e2e3db"/>
<rect x="1208.20" y="1072.9" width="20.10" height="15.7" fill="#112b00"/>
<rect x="1229.30" y="1072.9" width="20.10" height="15.7" fill="#225500"/>
<rect x="1250.40" y="1072.9" width="20.10" height="15.7" fill="#338000"/>
<rect x="1271.50" y="1072.9" width="20.10" height="15.7" fill="#44aa00"/>
<rect x="1292.60" y="1072.9" width="20.10" height="15.7" fill="#55d400"/>
<rect x="1313.70" y="1072.9" width="20.10" height="15.7" fill="#66ff00"/>
<rect x="1334.80" y="1072.9" width="20.10" height="15.7" fill="#7fff2a"/>
<rect x="1355.90" y="1072.9" width="20.10" height="15.7" fill="#99ff55"/>
<rect x="1377.00" y="1072.9" width="20.10" height="15.7" fill="#b3ff80"/>
<rect x="1398.10" y="1072.9" width="20.10" height="15.7" fill="#ccffaa"/>
<rect x="1419.20" y="1072.9" width="20.10" height="15.7" fill="#e6ffd5"/>
<rect x="1440.30" y="1072.9" width="20.10" height="15.7" fill="#17280b"/>
<rect x="1461.40" y="1072.9" width="20.10" height="15.7" fill="#2d5016"/>
<rect x="1482.50" y="1072.9" width="20.10" height="15.7" fill="#447821"/>
<rect x="1503.60" y="1072.9" width="20.10" height="15.7" fill="#5aa02c"/>
<rect x="1524.70" y="1072.9" width="20.10" height="15.7" fill="#71c837"/>
<rect x="1545.80" y="1072.9" width="20.10" height="15.7" fill="#8dd35f"/>
<rect x="1566.90" y="1072.9" width="20.10" height="15.7" fill="#aade87"/>
<rect x="1588.00" y="1072.9" width="20.10" height="15.7" fill="#c6e9af"/>
<rect x="1609.10" y="1072.9" width="20.10" height="15.7" fill="#e3f4d7"/>
<rect x="1630.20" y="1072.9" width="20.10" height="15.7" fill="#1f241c"/>
<rect x="1651.30" y="1072.9" width="20.10" height="15.7" fill="#3e4837"/>
<rect x="1672.40" y="1072.9" width="20.10" height="15.7" fill="#5d6c53"/>
<rect x="1693.50" y="1072.9" width="20.10" height="15.7" fill="#7c916f"/>
<rect x="1714.60" y="1072.9" width="20.10" height="15.7" fill="#9dac93"/>
<rect x="1735.70" y="1072.9" width="20.10" height="15.7" fill="#bec8b7"/>
<rect x="1756.80" y="1072.9" width="20.10" height="15.7" fill="#dee3db"/>
<rect x="1777.90" y="1072.9" width="20.10" height="15.7" fill="#002b00"/>
<rect x="1799.00" y="1072.9" width="20.10" height="15.7" fill="#005500"/>
<rect x="1820.10" y="1072.9" width="20.10" height="15.7" fill="#008000"/>
<rect x="1841.20" y="1072.9" width="20.10" height="15.7" fill="#00aa00"/>
</svg>
<svg class="a" style="left:1864px;top:1056px" width="56" height="34" viewBox="0 0 56 34" fill="none" stroke-linecap="butt"><path d="M2.5,19l5.5,-5.5l5.5,5.5" stroke="#6f6f6f" stroke-width="2.6"/><path d="M25.5,12.5l5.8,5.8l5.8,-5.8" stroke="#f0f0f0" stroke-width="2.6"/><path d="M45.5,15h12M45.5,20.5h12M45.5,26h12" stroke="#f0f0f0" stroke-width="2.2"/></svg>
<!-- p_status -->
<div class="t" style="left:21.98px;top:1095.20px;font-size:16.95px;line-height:1;letter-spacing:0;color:#6c6c6c;transform:scaleX(0.876);transform-origin:0 0;">Fill:</div>
<div style="left:64.5px;top:1091.5px;width:50px;height:20px;background:#fff;border-radius:3px"></div>
<div class="t" style="left:6.38px;top:1115.90px;font-size:16.95px;line-height:1;letter-spacing:0;color:#6c6c6c;transform:scaleX(0.721);transform-origin:0 0;">Stroke:</div>
<div class="t" style="left:68.47px;top:1115.90px;font-size:16.95px;line-height:1;letter-spacing:0;color:#9a9a9a;transform:scaleX(0.942);transform-origin:0 0;">Unset</div>
<div class="t" style="left:127.88px;top:1116.92px;font-size:15.75px;line-height:1;letter-spacing:0;color:#9a9a9a;transform:scaleX(0.871);transform-origin:0 0;">1,00</div>
<div class="t" style="left:163.58px;top:1106.30px;font-size:16.95px;line-height:1;letter-spacing:0;color:#6c6c6c;transform:scaleX(0.805);transform-origin:0 0;">O:</div>
<div style="left:184px;top:1091.5px;width:75px;height:36px;background:#313131;border-radius:5px;box-shadow:inset 0 0 0 1px #2a2a2a"></div>
<div class="t" style="left:191.77px;top:1106.30px;font-size:16.95px;line-height:1;letter-spacing:0;color:#a4a4a4;transform:scaleX(0.838);transform-origin:0 0;">100</div>
<svg class="a" style="left:222.3px;top:1104.9px" width="13.5" height="15" viewBox="0 0 13.5 15"><path d="M0,7.5H13.5" stroke="#a8a8a8" stroke-width="1.5"/></svg><svg class="a" style="left:241.5px;top:1104.9px" width="13.5" height="15" viewBox="0 0 13.5 15"><path d="M0,7.5H13.5M6.75,0.5V14.5" stroke="#4a4a4a" stroke-width="1.5" fill="none"/></svg>
<div style="left:267px;top:1100px;width:3px;height:24px;background:#f0781e"></div>
<div class="t" style="left:276.08px;top:1106.00px;font-size:16.95px;line-height:1;letter-spacing:0;color:#727272;transform:scaleX(0.904);transform-origin:0 0;">Image</div>
<svg class="i" style="left:338.65px;top:1104.25px;" width="16" height="16" viewBox="0 0 16 16" ><path d="M1,8.6C3,5 5.4,3.6 8,3.6S13,5 15,8.6C13,12.2 10.6,13.6 8,13.6S3,12.2 1,8.6z" fill="none" stroke="#f2f2f2" stroke-width="1.7"/><circle cx="8" cy="8.6" r="2.5" fill="#f2f2f2"/><path d="M3.4,3.4L5,5.4M8,1.2V3.6M12.6,3.4L11,5.4" stroke="#f2f2f2" stroke-width="1.4"/></svg>
<svg class="i" style="left:377.6px;top:1104.5px;" width="14" height="14" viewBox="0 0 16 16" ><rect x="1" y="7.6" width="10.4" height="7.8" rx="0.8" fill="#f2f2f2"/><path d="M8.2,7.6V4.4a3,3 0 0 1 6,0V6.2" fill="none" stroke="#f2f2f2" stroke-width="1.8"/><path d="M2.6,10.2H9.8M2.6,12.8H9.8" stroke="#9a9a9a" stroke-width=".9"/></svg>
<div class="t" style="left:409.27px;top:1104.80px;font-size:16.95px;line-height:1;letter-spacing:0;color:#a8a8a8;transform:scaleX(0.807);transform-origin:0 0; font-weight:bold;-webkit-text-stroke:0;">Alt:</div>
<div class="t" style="left:436.88px;top:1104.80px;font-size:16.95px;line-height:1;letter-spacing:0;color:#a0a0a0;transform:scaleX(0.880);transform-origin:0 0;">Select with touch-path, Cycle through objects, Forced Drag</div>
<svg class="a" style="left:1503px;top:1106px" width="8" height="13" viewBox="0 0 8 13"><path d="M7.5,0.5V12.5L0.5,6.5z" fill="#8c8c8c"/></svg>
<div style="left:1524.5px;top:1092px;width:35.5px;height:36px;background:#313131;border-radius:5px;box-shadow:inset 0 0 0 1px #2d2d2d"></div>
<svg class="a" style="left:1536.5px;top:1109px" width="12" height="7" viewBox="0 0 12 7"><path d="M0.5,0.5H11.5L6,6.5z" fill="#5e5e5e"/></svg>
<svg class="a" style="left:1575px;top:1106px" width="8" height="13" viewBox="0 0 8 13"><path d="M0.5,0.5V12.5L7.5,6.5z" fill="#8c8c8c"/></svg>
<div class="t" style="left:1603.58px;top:1095.20px;font-size:16.95px;line-height:1;letter-spacing:0;color:#7a7a7a;transform:scaleX(0.787);transform-origin:0 0;">X:</div>
<div class="t" style="left:1631.78px;top:1096.09px;font-size:15.9px;line-height:1;letter-spacing:0;color:#8c8c8c;transform:scaleX(0.845);transform-origin:0 0;">144,77</div>
<div class="t" style="left:1603.58px;top:1115.90px;font-size:16.95px;line-height:1;letter-spacing:0;color:#7a7a7a;transform:scaleX(0.836);transform-origin:0 0;">Y:</div>
<div class="t" style="left:1631.78px;top:1116.79px;font-size:15.9px;line-height:1;letter-spacing:0;color:#8c8c8c;transform:scaleX(0.866);transform-origin:0 0;">118,39</div>
<div class="t" style="left:1684.28px;top:1105.10px;font-size:16.95px;line-height:1;letter-spacing:0;color:#6c6c6c;transform:scaleX(0.956);transform-origin:0 0;">Z:</div>
<div style="left:1701px;top:1092px;width:92px;height:36px;background:#313131;border-radius:5px;box-shadow:inset 0 0 0 1px #2a2a2a"></div>
<div class="t" style="left:1716.98px;top:1105.10px;font-size:16.95px;line-height:1;letter-spacing:0;color:#a4a4a4;transform:scaleX(0.840);transform-origin:0 0;">89%</div>
<svg class="a" style="left:1759.8px;top:1105.1px" width="12.9" height="15" viewBox="0 0 12.9 15"><path d="M0,7.5H12.9" stroke="#a8a8a8" stroke-width="1.5"/></svg><svg class="a" style="left:1777.2px;top:1105.1px" width="12.9" height="15" viewBox="0 0 12.9 15"><path d="M0,7.5H12.9M6.45,0.5V14.5" stroke="#a8a8a8" stroke-width="1.5" fill="none"/></svg>
<div class="t" style="left:1803.38px;top:1105.10px;font-size:16.95px;line-height:1;letter-spacing:0;color:#6c6c6c;transform:scaleX(0.743);transform-origin:0 0;">R:</div>
<div style="left:1820px;top:1092px;width:105px;height:36px;background:#313131;border-radius:5px;box-shadow:inset 0 0 0 1px #2a2a2a"></div>
<div class="t" style="left:1838.93px;top:1105.10px;font-size:16.95px;line-height:1;letter-spacing:0;color:#a4a4a4;transform:scaleX(0.834);transform-origin:0 0;">0,00°</div>
<svg class="a" style="left:1885.5px;top:1105.1px" width="13.2" height="15" viewBox="0 0 13.2 15"><path d="M0,7.5H13.2" stroke="#a8a8a8" stroke-width="1.5"/></svg><svg class="a" style="left:1902.3px;top:1105.1px" width="13.2" height="15" viewBox="0 0 13.2 15"><path d="M0,7.5H13.2M6.6,0.5V14.5" stroke="#a8a8a8" stroke-width="1.5" fill="none"/></svg>
<div style="left:375px;top:1039.5px;width:735px;height:7px;background:#5f5f5f;border-radius:3px"></div>
<div style="left:1462.5px;top:454px;width:7.5px;height:279px;background:#5f5f5f;border-radius:3px"></div>
<div style="left:1477px;top:134px;width:13px;height:922px;background:#363636"></div>
<div style="left:1490px;top:134px;width:2px;height:922px;background:#2c2c2c"></div>
<svg class="a" style="left:1480.2px;top:587px" width="6" height="16" viewBox="0 0 6 16" fill="#e8e8e8"><circle cx="3" cy="2.4" r="1.55"/><circle cx="3" cy="7" r="1.55"/><circle cx="3" cy="11.6" r="1.55"/></svg>
<svg class="a" style="left:1462.5px;top:1038.5px" width="8" height="8" viewBox="0 0 8 8"><circle cx="4" cy="4" r="2.2" fill="#f0f0f0"/></svg>
<svg class="a" style="left:1458px;top:137px" width="16" height="14" viewBox="0 0 16 14"><rect x="1" y="1" width="14" height="9.4" rx="1" fill="#262626" stroke="#bcbcbc" stroke-width="1.5"/><path d="M5,12.6H11" stroke="#e0e0e0" stroke-width="1.8"/></svg>
</div>
</body></html>
